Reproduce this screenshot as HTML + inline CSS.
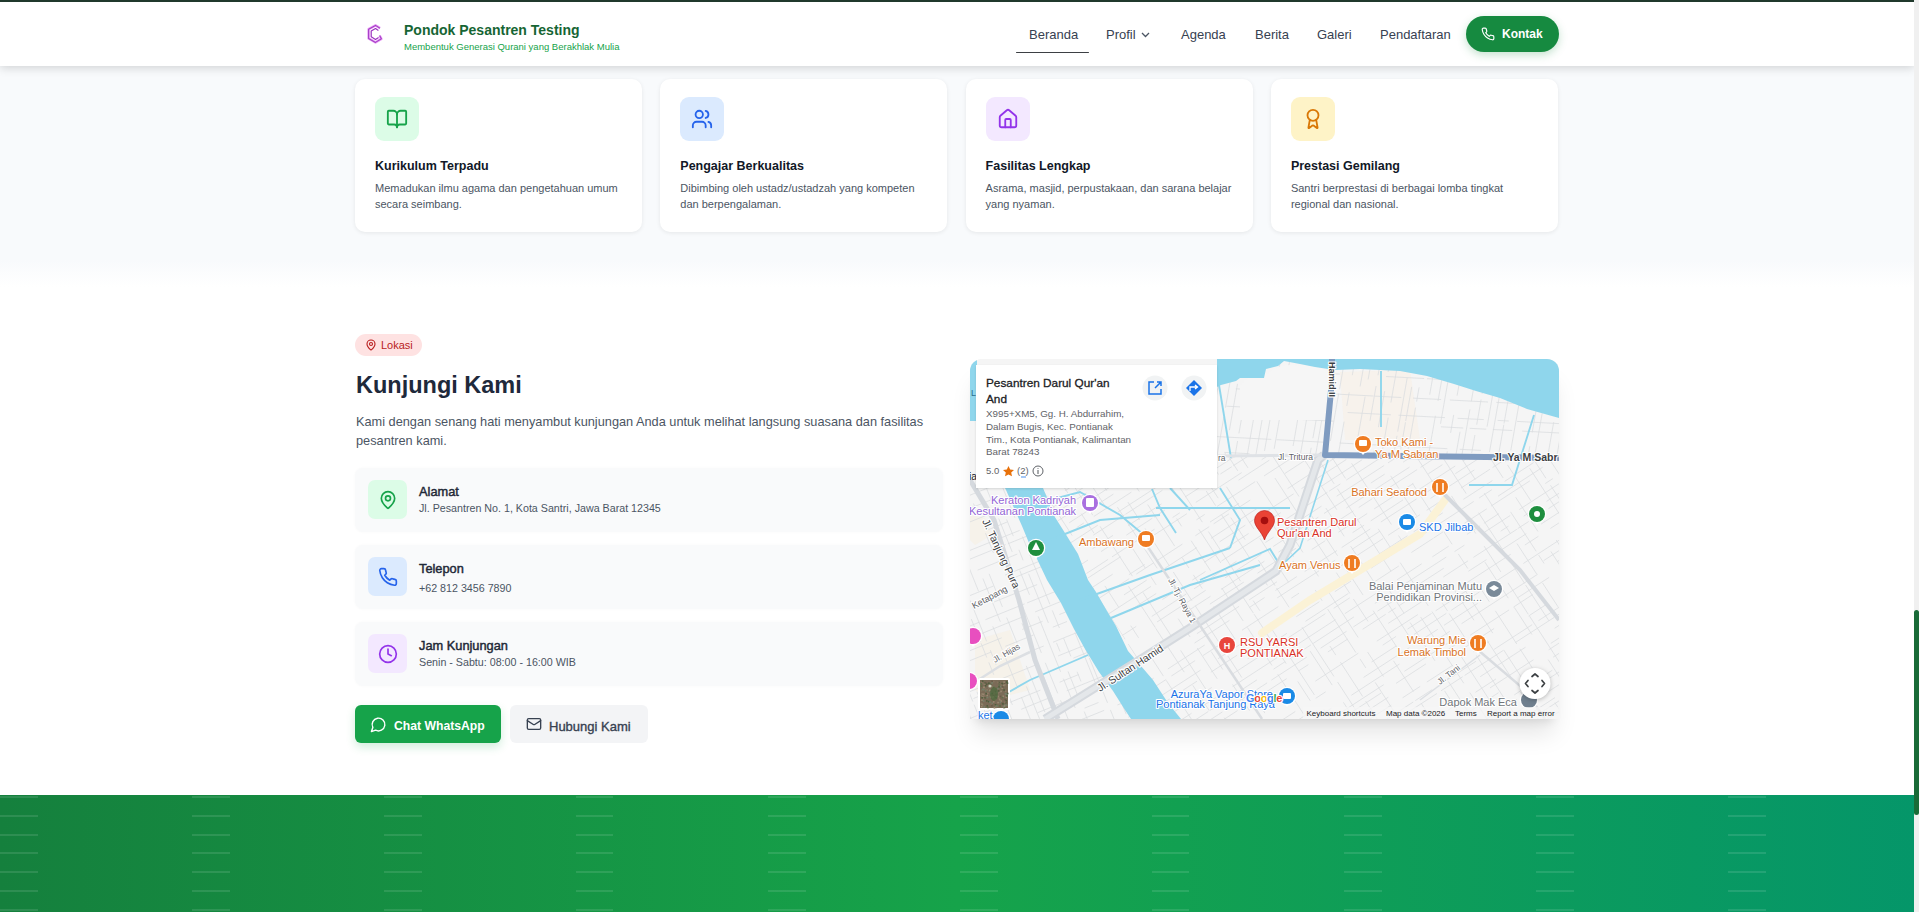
<!DOCTYPE html>
<html><head><meta charset="utf-8">
<style>
*{margin:0;padding:0;box-sizing:border-box}
html,body{width:1919px;height:912px;overflow:hidden;background:#fff;font-family:"Liberation Sans",sans-serif}
.abs{position:absolute}
#page{position:absolute;left:0;top:0;width:1914px;height:912px;overflow:hidden;background:#fff}
#sec1{position:absolute;left:0;top:0;width:1914px;height:287px;background:linear-gradient(to bottom,#f8fafc 0,#f8fafc 260px,#fff 287px)}
#topline{position:absolute;left:0;top:0;width:1914px;height:2px;background:#20392c;z-index:5}
#header{position:absolute;left:0;top:2px;width:1914px;height:64px;background:#fff;box-shadow:0 2px 9px rgba(0,0,0,.16);z-index:4}
.card{position:absolute;top:79px;width:287px;height:153px;background:#fff;border-radius:10px;box-shadow:0 1px 4px rgba(0,0,0,.08)}
.ibox{position:absolute;left:20px;top:18px;width:44px;height:44px;border-radius:9px;display:flex;align-items:center;justify-content:center}
.ctitle{position:absolute;left:20px;top:79.5px;font-size:12.5px;font-weight:bold;color:#111827;white-space:nowrap}
.cdesc{position:absolute;left:20px;top:101px;font-size:11px;line-height:16px;color:#4b5563;width:252px}
.nav{position:absolute;top:26px;font-size:13px;color:#374151;white-space:nowrap}
.info{position:absolute;left:355px;width:588px;height:64px;background:#f9fafb;border-radius:8px;box-shadow:0 0 3px rgba(0,0,0,.03)}
.info .ic{position:absolute;left:13px;top:12px;width:39px;height:39px;border-radius:7px;display:flex;align-items:center;justify-content:center}
.info .t{position:absolute;left:64px;top:16px;font-size:12.8px;font-weight:normal;-webkit-text-stroke:.45px #1f2937;color:#1f2937;white-space:nowrap}
.info .s{position:absolute;left:64px;top:34px;font-size:10.7px;color:#4b5563;white-space:nowrap}
#footer{position:absolute;left:0;top:795px;width:1914px;height:117px;background:linear-gradient(90deg,#15803d 0%,#16a34a 50%,#059669 100%)}
#fpat{position:absolute;left:0;top:0;width:1914px;height:117px;background-image:repeating-linear-gradient(to bottom,rgba(255,255,255,.11) 0,rgba(255,255,255,.11) 2px,transparent 2px,transparent 18.8px);-webkit-mask-image:repeating-linear-gradient(to right,#000 0,#000 37.5px,transparent 37.5px,transparent 192px);background-position:0 1px}
#sbtrack{position:absolute;left:1914px;top:0;width:5px;height:912px;background:#f0f0f0}
#sbthumb{position:absolute;left:1914px;top:610px;width:5px;height:205px;background:#1a6b38;border-radius:3px}
</style></head>
<body>
<div id="page">
  <div id="sec1"></div>
  <div id="topline"></div>
  <div id="header">
    <svg class="abs" style="left:362px;top:18px" width="28" height="28" viewBox="362 20 28 28">
      <path d="M380,28.2 L375.5,25.4 L368.6,29.2 L368.6,38.4 L375.5,42.4 L381.4,38.8 L379.6,35.6" fill="none" stroke="#e9a6f5" stroke-width="2.6" stroke-linejoin="round"/>
      <path d="M380,28.2 L375.5,25.4 L368.6,29.2 L368.6,38.4 L375.5,42.4 L381.4,38.8 L379.6,35.6" fill="none" stroke="#a63cc8" stroke-width="1.1" stroke-linejoin="round"/>
      <path d="M378.4,30.4 L375.5,28.6 L371.2,31 L371.2,36.8 L375.5,39.4 L378.6,37.6" fill="none" stroke="#9a30bf" stroke-width="1.2" stroke-linejoin="round"/>
    </svg>
    <div id="brand" class="abs" style="left:404px;top:19.5px;font-size:14px;font-weight:bold;color:#166534;white-space:nowrap">Pondok Pesantren Testing</div>
    <div id="tag" class="abs" style="left:404px;top:39px;font-size:9.5px;color:#16a34a;white-space:nowrap">Membentuk Generasi Qurani yang Berakhlak Mulia</div>
    <div id="n1" class="nav" style="left:1029px;top:25px">Beranda</div>
    <div class="abs" style="left:1016px;top:49.8px;width:73px;height:1.5px;border-radius:1px;background:#3d4044"></div>
    <div id="n2" class="nav" style="left:1106px;top:25px">Profil</div>
    <svg class="abs" style="left:1141px;top:30px" width="9" height="6" viewBox="0 0 9 6"><path d="M1 1 L4.5 4.5 L8 1" fill="none" stroke="#4b5563" stroke-width="1.3"/></svg>
    <div id="n3" class="nav" style="left:1181px;top:25px">Agenda</div>
    <div id="n4" class="nav" style="left:1255px;top:25px">Berita</div>
    <div id="n5" class="nav" style="left:1317px;top:25px">Galeri</div>
    <div id="n6" class="nav" style="left:1380px;top:25px">Pendaftaran</div>
    <div id="kontak" class="abs" style="left:1466px;top:14px;width:93px;height:36px;border-radius:18px;background:#168a40;box-shadow:0 3px 8px rgba(22,138,64,.25)">
      <svg class="abs" style="left:15px;top:11px" width="14" height="14" viewBox="0 0 24 24" fill="none" stroke="#fff" stroke-width="2" stroke-linecap="round" stroke-linejoin="round"><path d="M22 16.92v3a2 2 0 0 1-2.18 2 19.79 19.79 0 0 1-8.63-3.07 19.5 19.5 0 0 1-6-6 19.79 19.79 0 0 1-3.07-8.67A2 2 0 0 1 4.11 2h3a2 2 0 0 1 2 1.72 12.84 12.84 0 0 0 .7 2.81 2 2 0 0 1-.45 2.11L8.09 9.91a16 16 0 0 0 6 6l1.27-1.27a2 2 0 0 1 2.11-.45 12.84 12.84 0 0 0 2.81.7A2 2 0 0 1 22 16.92z"/></svg>
      <div id="kt" class="abs" style="left:36px;top:10.5px;font-size:12px;font-weight:bold;color:#fff">Kontak</div>
    </div>
  </div>

  <!-- feature cards -->
  <div class="card" style="left:355px">
    <div class="ibox" style="background:#dcfce7">
      <svg width="22" height="22" viewBox="0 0 24 24" fill="none" stroke="#16a34a" stroke-width="2" stroke-linecap="round" stroke-linejoin="round"><path d="M12 7v14"/><path d="M3 18a1 1 0 0 1-1-1V4a1 1 0 0 1 1-1h5a4 4 0 0 1 4 4 4 4 0 0 1 4-4h5a1 1 0 0 1 1 1v13a1 1 0 0 1-1 1h-6a3 3 0 0 0-3 3 3 3 0 0 0-3-3z"/></svg>
    </div>
    <div id="c1t" class="ctitle">Kurikulum Terpadu</div>
    <div id="c1d" class="cdesc">Memadukan ilmu agama dan pengetahuan umum secara seimbang.</div>
  </div>
  <div class="card" style="left:660.3px">
    <div class="ibox" style="background:#dbeafe">
      <svg width="22" height="22" viewBox="0 0 24 24" fill="none" stroke="#2563eb" stroke-width="2" stroke-linecap="round" stroke-linejoin="round"><path d="M16 21v-2a4 4 0 0 0-4-4H6a4 4 0 0 0-4 4v2"/><circle cx="9" cy="7" r="4"/><path d="M22 21v-2a4 4 0 0 0-3-3.87"/><path d="M16 3.13a4 4 0 0 1 0 7.75"/></svg>
    </div>
    <div class="ctitle">Pengajar Berkualitas</div>
    <div class="cdesc">Dibimbing oleh ustadz/ustadzah yang kompeten dan berpengalaman.</div>
  </div>
  <div class="card" style="left:965.6px">
    <div class="ibox" style="background:#f3e8ff">
      <svg width="22" height="22" viewBox="0 0 24 24" fill="none" stroke="#9333ea" stroke-width="2" stroke-linecap="round" stroke-linejoin="round"><path d="M15 21v-8a1 1 0 0 0-1-1h-4a1 1 0 0 0-1 1v8"/><path d="M3 10a2 2 0 0 1 .709-1.528l7-5.999a2 2 0 0 1 2.582 0l7 5.999A2 2 0 0 1 21 10v9a2 2 0 0 1-2 2H5a2 2 0 0 1-2-2z"/></svg>
    </div>
    <div class="ctitle">Fasilitas Lengkap</div>
    <div class="cdesc">Asrama, masjid, perpustakaan, dan sarana belajar yang nyaman.</div>
  </div>
  <div class="card" style="left:1270.9px">
    <div class="ibox" style="background:#fef3c7">
      <svg width="22" height="22" viewBox="0 0 24 24" fill="none" stroke="#d97706" stroke-width="2" stroke-linecap="round" stroke-linejoin="round"><path d="m15.477 12.89 1.515 8.526a.5.5 0 0 1-.81.47l-3.58-2.687a1 1 0 0 0-1.197 0l-3.586 2.686a.5.5 0 0 1-.81-.469l1.514-8.526"/><circle cx="12" cy="8" r="6"/></svg>
    </div>
    <div class="ctitle">Prestasi Gemilang</div>
    <div class="cdesc">Santri berprestasi di berbagai lomba tingkat regional dan nasional.</div>
  </div>

  <!-- lokasi -->
  <div id="badge" class="abs" style="left:355px;top:334px;width:67px;height:22px;border-radius:11px;background:#fee2e2">
    <svg class="abs" style="left:10px;top:5px" width="12" height="12" viewBox="0 0 24 24" fill="none" stroke="#b91c1c" stroke-width="2.2" stroke-linecap="round" stroke-linejoin="round"><path d="M20 10c0 4.993-5.539 10.193-7.399 11.799a1 1 0 0 1-1.202 0C9.539 20.193 4 14.993 4 10a8 8 0 0 1 16 0"/><circle cx="12" cy="10" r="3"/></svg>
    <div id="lok" class="abs" style="left:26px;top:5px;font-size:11px;color:#b91c1c">Lokasi</div>
  </div>
  <div id="h2" class="abs" style="left:356px;top:371.5px;font-size:23.5px;font-weight:bold;color:#1e293b;white-space:nowrap">Kunjungi Kami</div>
  <div id="para" class="abs" style="left:356px;top:412px;width:580px;font-size:12.75px;line-height:19px;color:#4b5563">Kami dengan senang hati menyambut kunjungan Anda untuk melihat langsung suasana dan fasilitas pesantren kami.</div>

  <div class="info" style="top:468px">
    <div class="ic" style="background:#dcfce7"><svg width="20" height="20" viewBox="0 0 24 24" fill="none" stroke="#16a34a" stroke-width="2" stroke-linecap="round" stroke-linejoin="round"><path d="M20 10c0 4.993-5.539 10.193-7.399 11.799a1 1 0 0 1-1.202 0C9.539 20.193 4 14.993 4 10a8 8 0 0 1 16 0"/><circle cx="12" cy="10" r="3"/></svg></div>
    <div id="i1t" class="t">Alamat</div>
    <div id="i1s" class="s">Jl. Pesantren No. 1, Kota Santri, Jawa Barat 12345</div>
  </div>
  <div class="info" style="top:545px">
    <div class="ic" style="background:#dbeafe"><svg width="20" height="20" viewBox="0 0 24 24" fill="none" stroke="#2563eb" stroke-width="2" stroke-linecap="round" stroke-linejoin="round"><path d="M22 16.92v3a2 2 0 0 1-2.18 2 19.79 19.79 0 0 1-8.63-3.07 19.5 19.5 0 0 1-6-6 19.79 19.79 0 0 1-3.07-8.67A2 2 0 0 1 4.11 2h3a2 2 0 0 1 2 1.72 12.84 12.84 0 0 0 .7 2.81 2 2 0 0 1-.45 2.110L8.09 9.91a16 16 0 0 0 6 6l1.27-1.27a2 2 0 0 1 2.11-.45 12.84 12.84 0 0 0 2.81.7A2 2 0 0 1 22 16.92z"/></svg></div>
    <div class="t">Telepon</div>
    <div class="s" style="top:36.5px">+62 812 3456 7890</div>
  </div>
  <div class="info" style="top:622px">
    <div class="ic" style="background:#f3e8ff"><svg width="20" height="20" viewBox="0 0 24 24" fill="none" stroke="#9333ea" stroke-width="2" stroke-linecap="round" stroke-linejoin="round"><circle cx="12" cy="12" r="10"/><polyline points="12 6 12 12 16 14"/></svg></div>
    <div class="t">Jam Kunjungan</div>
    <div class="s">Senin - Sabtu: 08:00 - 16:00 WIB</div>
  </div>

  <div id="wa" class="abs" style="left:355px;top:705px;width:146px;height:38px;border-radius:6px;background:#16a34a;box-shadow:0 4px 10px rgba(22,163,74,.2)">
    <svg class="abs" style="left:15px;top:10.5px" width="17" height="17" viewBox="0 0 24 24" fill="none" stroke="#fff" stroke-width="2" stroke-linecap="round" stroke-linejoin="round"><path d="M7.9 20A9 9 0 1 0 4 16.1L2 22Z"/></svg>
    <div id="wat" class="abs" style="left:39px;top:14px;font-size:12.2px;font-weight:bold;color:#fff;white-space:nowrap">Chat WhatsApp</div>
  </div>
  <div id="hk" class="abs" style="left:510px;top:705px;width:138px;height:38px;border-radius:6px;background:#f3f4f6">
    <svg class="abs" style="left:16px;top:11px" width="16" height="16" viewBox="0 0 24 24" fill="none" stroke="#374151" stroke-width="2" stroke-linecap="round" stroke-linejoin="round"><rect width="20" height="16" x="2" y="4" rx="2"/><path d="m22 7-8.97 5.7a1.94 1.94 0 0 1-2.06 0L2 7"/></svg>
    <div id="hkt" class="abs" style="left:39px;top:13.5px;font-size:13px;color:#374151;white-space:nowrap;-webkit-text-stroke:.35px #374151">Hubungi Kami</div>
  </div>

  <!-- MAP -->
  <div id="map" class="abs" style="left:970px;top:359px;width:589px;height:360px;border-radius:12px 12px 0 0;overflow:hidden;background:#f1f3f4;box-shadow:0 20px 25px -5px rgba(0,0,0,.10),0 8px 10px -6px rgba(0,0,0,.10)">
<svg width="589" height="360" viewBox="970 359 589 360" style="position:absolute;left:0;top:0;font-family:'Liberation Sans',sans-serif">
<defs>
<clipPath id="cR1"><polygon points="1217,359 1559,359 1559,455 1330,455 1217,458"/></clipPath>
<clipPath id="cR2"><polygon points="1217,455 1559,455 1559,719 1175,719 1100,600 1040,488 1217,488"/></clipPath>
<clipPath id="cR3"><polygon points="970,488 1040,488 1100,600 1140,719 970,719"/></clipPath>
</defs>
<rect x="970" y="359" width="589" height="360" fill="#f5f5f5"/>
<polygon points="1340,372 1410,370 1420,440 1345,440" fill="#f8efe3" opacity=".55"/>
<polygon points="970,515 985,518 992,535 975,545 970,540" fill="#f7f0e0" opacity=".5"/><polygon points="975,640 1010,630 1030,690 990,700 975,690" fill="#f7f0e0" opacity=".5"/>
<path clip-path="url(#cR1)" d="M1684.3 197.9L1681.5 213.5M1678.7 229.5L1672.5 264.8M1670.9 273.8L1664.9 307.7M1664.7 308.6L1662.7 320.1M1662.3 322.3L1653.5 372.5M1652.9 375.6L1645.9 415.6M1641.8 438.9L1636.8 467.1M1632.5 491.1L1623.4 543.0M1618.4 571.6L1615.3 588.8M1612.8 603.1L1608.1 630.0M1605.7 643.5L1603.8 654.4M1602.9 659.5L1597.6 689.3M1596.2 697.0L1590.8 728.1M1673.4 196.0L1669.8 216.3M1667.3 230.5L1658.0 283.2M1654.9 301.1L1644.6 359.2M1644.1 362.1L1635.9 408.8M1635.2 412.5L1633.5 422.4M1630.6 438.8L1624.0 476.1M1620.2 497.6L1612.5 541.1M1600.8 607.7L1595.1 639.8M1663.9 194.3L1659.9 216.7M1658.2 226.2L1656.7 235.3M1654.7 246.6L1652.2 260.5M1651.9 262.0L1649.4 276.5M1648.3 282.6L1639.1 335.1M1628.5 394.8L1619.3 446.9M1609.7 501.8L1606.9 517.4M1606.1 521.8L1602.6 541.6M1600.5 553.5L1596.8 574.9M1589.6 615.7L1582.0 658.9M1655.2 192.8L1646.0 245.4M1642.5 265.1L1637.5 293.4M1637.1 295.9L1635.1 307.0M1634.8 308.6L1632.0 324.8M1630.5 333.2L1629.1 341.1M1623.6 372.0L1616.7 411.3M1616.1 414.9L1611.5 440.6M1610.0 449.6L1600.9 500.9M1596.6 525.4L1590.8 558.0M1581.9 608.8L1575.7 643.7M1571.2 669.6L1562.0 721.7M1648.6 191.6L1645.7 208.0M1642.3 227.0L1633.9 274.8M1619.5 356.6L1610.8 405.8M1607.3 425.9L1603.8 445.4M1601.6 458.1L1599.9 467.5M1583.6 560.2L1573.6 617.0M1572.0 626.0L1568.5 645.5M1639.1 189.9L1631.8 231.2M1628.4 250.9L1621.0 292.6M1617.1 315.0L1608.9 361.3M1596.9 429.6L1586.7 487.2M1585.0 496.9L1575.0 553.3M1559.4 642.0L1549.2 700.1M1608.6 308.9L1605.3 327.6M1604.2 333.8L1600.7 354.0M1592.4 401.0L1587.8 427.0M1574.4 502.8L1568.5 536.4M1566.2 549.5L1564.6 558.3M1562.7 569.1L1561.3 577.2M1557.8 596.9L1552.2 629.0M1549.0 646.9L1544.7 671.4M1542.4 684.2L1534.0 732.2M1622.6 187.0L1618.7 209.1M1605.6 283.4L1600.2 314.0M1597.6 329.1L1591.5 363.2M1562.6 527.4L1553.6 578.3M1553.0 581.7L1547.6 612.2M1547.3 614.0L1545.3 625.6M1542.4 642.1L1532.9 695.9M1605.0 222.0L1601.7 241.1M1587.5 321.8L1584.6 337.9M1582.7 348.5L1578.3 373.8M1577.4 378.6L1569.5 423.5M1569.4 423.9L1564.1 454.4M1564.0 454.8L1557.0 494.7M1541.0 585.0L1538.7 598.2M1537.6 604.8L1529.1 652.6M1604.8 183.9L1602.1 199.4M1598.1 222.0L1590.4 265.8M1590.0 268.0L1582.4 311.1M1567.9 393.1L1565.8 405.3M1562.1 426.4L1552.9 478.4M1550.9 489.6L1544.5 525.8M1540.5 548.6L1538.0 563.1M1535.7 576.1L1533.3 589.6M1532.6 593.5L1529.4 611.8M1528.0 619.4L1519.8 666.2M1518.5 673.3L1515.5 690.3M1596.0 182.3L1594.5 191.0M1586.1 238.3L1583.8 251.6M1580.2 271.8L1574.4 305.0M1561.8 376.3L1557.3 401.7M1553.7 422.2L1546.6 462.7M1544.8 472.6L1542.9 483.3M1542.4 486.5L1534.3 532.3M1527.4 571.5L1519.9 613.8M1518.7 620.7L1514.7 643.6M1506.1 692.1L1496.0 749.8M1583.3 180.1L1579.2 203.8M1577.6 212.6L1572.8 240.0M1570.7 251.7L1567.5 269.9M1565.3 282.3L1561.6 303.7M1561.2 305.9L1559.4 315.9M1559.3 316.5L1555.8 336.3M1553.3 350.7L1545.1 397.0M1542.2 413.2L1532.9 466.1M1531.2 475.7L1520.9 534.0M1512.9 579.6L1503.5 633.1M1500.7 648.6L1492.0 698.0M1564.5 249.4L1557.9 287.2M1554.0 309.2L1546.3 352.6M1545.3 358.2L1542.7 372.9M1541.2 381.8L1532.2 432.5M1529.8 446.2L1522.8 486.2M1519.8 502.9L1518.4 511.0M1514.9 530.6L1509.0 564.2M1506.7 577.4L1504.7 588.7M1501.5 606.8L1499.4 618.5M1491.8 661.7L1486.0 694.8M1567.1 177.2L1558.8 224.4M1556.1 239.6L1554.0 251.4M1553.4 255.0L1545.3 301.0M1544.0 308.5L1542.5 317.0M1542.2 318.5L1534.8 360.8M1531.7 377.8L1527.7 400.6M1508.4 510.2L1498.3 567.7M1496.3 578.7L1493.0 597.4M1488.9 620.6L1482.3 658.3M1559.2 175.8L1549.8 229.1M1546.7 246.4L1537.2 300.3M1535.1 312.3L1533.7 320.3M1531.6 332.4L1527.5 355.8M1526.8 359.2L1522.6 383.3M1519.0 404.0L1510.8 450.3M1494.3 543.8L1490.3 566.6M1488.7 575.7L1478.3 634.7M1475.7 649.3L1470.5 679.0M1469.3 685.8L1467.0 698.9M1548.1 173.9L1544.4 194.5M1538.5 227.8L1529.2 281.0M1525.6 301.0L1516.0 355.6M1511.9 378.8L1504.0 423.5M1503.8 424.8L1498.4 455.7M1490.9 498.0L1488.4 512.4M1479.0 565.3L1475.3 586.5M1472.4 602.7L1466.0 639.1M1538.9 172.2L1533.4 203.2M1532.8 206.6L1530.6 219.1M1529.1 227.5L1525.6 247.7M1524.4 254.0L1515.0 307.3M1511.8 325.8L1506.7 354.9M1504.4 367.8L1499.9 393.0M1499.7 394.5L1489.5 451.9M1489.0 455.0L1481.9 495.2M1478.2 516.4L1474.3 538.2M1463.7 598.5L1454.4 651.0M1454.3 651.6L1446.5 695.8M1516.5 259.8L1512.9 280.4M1503.4 334.5L1495.5 379.4M1492.6 395.3L1487.1 426.6M1475.3 493.8L1468.0 534.8M1466.7 542.2L1463.1 563.0M1460.3 578.7L1457.9 592.3M1457.6 594.0L1450.9 631.8M1449.3 641.3L1442.4 680.0M1442.4 680.2L1436.9 711.7M1521.7 169.2L1516.1 201.4M1515.0 207.2L1505.0 264.3M1501.9 281.6L1500.3 290.6M1498.2 302.9L1493.0 332.3M1491.9 338.6L1482.1 393.9M1481.1 399.5L1476.7 424.7M1474.9 435.0L1471.7 453.0M1461.4 511.4L1457.2 535.3M1453.6 555.5L1450.2 574.7M1446.9 593.4L1437.0 650.0M1434.8 662.2L1431.4 681.6M1512.5 167.6L1509.8 183.0M1508.1 192.7L1497.9 250.4M1481.1 345.7L1471.3 401.3M1469.9 409.4L1460.1 465.2M1456.8 483.6L1449.4 525.5M1447.8 534.8L1443.4 559.7M1437.2 594.7L1434.7 608.9M1422.4 679.0L1417.1 709.1M1506.7 166.6L1497.0 221.5M1496.2 226.3L1486.7 280.1M1486.6 280.8L1477.9 330.3M1460.0 431.8L1453.0 471.2M1451.9 477.7L1447.6 501.8M1446.4 508.6L1438.2 555.1M1434.2 577.7L1424.3 633.9M1497.8 165.0L1494.1 185.7M1481.7 256.2L1473.7 301.9M1470.1 322.2L1463.2 361.2M1461.8 369.2L1457.1 395.6M1453.7 414.9L1450.6 432.9M1447.3 451.4L1445.3 462.6M1436.6 512.1L1426.3 570.6M1425.1 577.1L1422.9 589.9M1420.7 602.2L1415.3 633.0M1414.3 638.7L1407.3 678.4M1478.6 207.9L1474.5 230.8M1472.1 244.8L1464.0 290.4M1458.9 319.6L1452.3 357.1M1450.8 365.1L1440.5 423.8M1422.4 526.5L1413.4 577.4M1409.4 599.9L1405.4 622.8M1480.1 161.9L1470.9 214.1M1469.0 225.2L1460.6 272.9M1456.5 296.2L1449.7 334.6M1447.0 349.8L1442.3 376.6M1441.7 380.1L1438.0 401.0M1435.4 415.8L1432.2 434.1M1432.1 434.3L1424.6 477.0M1423.8 481.5L1420.6 499.8M1417.1 519.4L1415.1 530.5M1414.7 533.0L1408.3 569.1M1405.6 584.8L1402.7 601.1M1394.4 648.1L1390.2 672.0M1471.0 160.3L1461.9 212.4M1457.5 237.0L1454.4 254.9M1451.2 272.9L1449.8 281.0M1435.3 363.1L1429.7 394.6M1419.9 450.5L1417.7 462.9M1415.0 478.3L1409.0 512.0M1408.4 515.6L1402.3 550.1M1385.3 646.8L1375.1 704.7M1459.5 158.2L1454.6 186.0M1450.7 208.2L1441.8 258.3M1436.0 291.5L1427.1 341.8M1426.3 346.3L1421.3 374.7M1419.1 387.4L1416.6 401.6M1415.5 407.7L1406.0 461.5M1397.4 510.2L1395.0 524.1M1392.4 538.8L1385.3 578.8M1384.0 586.4L1377.3 624.1M1375.5 634.6L1370.1 665.3M1452.2 157.0L1446.4 189.9M1445.4 195.7L1437.0 243.5M1435.0 254.8L1429.3 286.9M1428.9 289.6L1423.6 319.5M1423.2 321.7L1417.2 355.7M1417.0 356.7L1414.9 368.8M1411.7 386.9L1405.7 421.0M1405.5 422.3L1400.7 449.5M1396.5 472.9L1387.4 524.7M1446.3 155.9L1441.8 181.8M1422.9 288.5L1419.7 307.1M1418.5 313.6L1414.3 337.8M1414.1 338.7L1411.3 354.8M1407.2 377.9L1397.7 431.6M1397.0 435.8L1394.6 449.5M1392.2 462.6L1387.6 488.9M1383.8 510.4L1377.2 548.0M1373.4 569.7L1363.0 628.4M1434.7 153.9L1430.1 180.2M1426.8 199.0L1423.8 216.0M1420.6 234.3L1411.8 284.1M1410.7 290.4L1400.4 348.6M1397.9 363.1L1393.6 387.0M1393.6 387.0L1390.9 402.5M1388.2 417.7L1382.2 451.8M1378.3 473.9L1374.9 493.4M1372.0 509.5L1370.6 517.5M1369.1 526.2L1364.5 552.4M1363.5 557.9L1356.8 596.0M1349.6 636.5L1346.0 656.9M1345.4 660.5L1338.2 701.1M1426.8 152.5L1423.0 173.9M1423.0 174.2L1416.5 210.8M1415.0 219.5L1409.6 250.1M1405.5 273.1L1401.9 293.8M1398.0 316.0L1391.8 351.1M1390.0 361.1L1388.1 372.0M1384.7 391.1L1378.4 427.2M1374.3 450.4L1371.1 468.5M1368.4 483.5L1361.3 524.2M1357.7 544.2L1353.5 567.9M1352.2 575.3L1342.8 628.8M1339.4 648.0L1338.0 656.2M1417.6 150.9L1409.5 196.7M1407.6 207.9L1405.2 221.1M1404.2 226.9L1399.8 251.9M1396.5 270.4L1387.5 321.5M1384.4 339.1L1378.0 375.3M1376.1 386.0L1370.0 420.7M1357.8 489.9L1356.3 498.5M1355.2 505.0L1347.1 550.9M1343.0 574.2L1338.6 598.8M1334.8 620.5L1331.3 640.6M1396.7 217.3L1391.4 247.6M1388.2 265.5L1384.1 289.1M1383.1 294.3L1381.1 306.2M1375.0 340.5L1370.5 366.0M1369.9 369.5L1368.1 379.5M1365.1 396.6L1357.4 440.1M1345.9 505.4L1337.1 555.2M1320.1 652.0L1317.7 665.3M1402.2 148.1L1393.1 199.4M1389.6 219.4L1380.8 269.5M1378.0 285.1L1375.7 298.1M1375.3 300.5L1372.1 318.9M1370.7 326.7L1369.1 335.7M1368.0 342.0L1360.1 386.5M1346.3 465.2L1339.3 504.8M1339.2 505.5L1333.8 535.8M1330.5 554.8L1322.7 598.8M1392.6 146.4L1391.2 154.4M1390.3 159.4L1380.1 217.3M1380.1 217.4L1374.2 250.5M1363.4 311.8L1359.7 333.1M1355.6 356.3L1352.3 375.2M1349.2 392.4L1346.8 405.9M1344.1 421.6L1335.6 469.8M1332.5 487.0L1325.5 527.0M1323.9 535.8L1319.0 563.8M1315.1 585.8L1305.7 639.1M1305.6 639.8L1301.8 661.1M1382.6 144.7L1373.2 197.8M1372.2 203.6L1366.0 238.7M1362.8 257.3L1355.5 298.2M1354.0 306.8L1351.2 322.6M1347.6 343.4L1339.5 389.3M1338.7 393.5L1330.4 440.9M1327.9 455.2L1322.3 486.7M1318.5 508.5L1315.3 526.2M1314.0 533.6L1305.0 584.7M1304.3 588.5L1300.7 609.1M1299.3 617.1L1296.5 633.2M1295.0 641.3L1284.8 699.1M1366.7 165.1L1358.1 213.7M1354.9 231.8L1351.8 249.7M1349.0 265.4L1345.7 283.8M1344.1 293.4L1339.1 321.7M1335.6 341.2L1329.7 374.7M1327.0 390.3L1324.3 405.4M1321.7 420.3L1313.6 466.1M1309.7 488.4L1303.1 525.7M1281.8 646.3L1274.3 689.0M1365.2 141.6L1358.2 181.7M1357.7 184.1L1349.3 232.0M1346.2 249.6L1342.6 270.3M1340.7 280.7L1333.7 320.4M1331.9 330.5L1322.1 386.0M1321.4 390.5L1312.9 438.2M1311.2 447.8L1301.1 505.6M1294.7 541.9L1288.6 576.4M1288.1 578.9L1281.9 614.4M1278.8 632.1L1271.6 672.7M1355.9 140.0L1345.9 196.4M1345.0 201.6L1340.1 229.5M1336.8 248.3L1326.5 306.6M1324.9 315.4L1321.1 337.3M1319.3 347.1L1314.2 376.4M1312.3 386.8L1307.8 412.7M1306.6 419.2L1298.5 465.1M1294.4 488.2L1291.1 507.3M1287.6 527.1L1284.3 545.8M1283.7 549.0L1275.0 598.3M1336.6 199.2L1331.0 231.1M1329.7 238.3L1327.2 252.6M1323.6 273.1L1314.5 324.6M1313.3 331.1L1309.6 352.0M1307.8 362.5L1306.4 370.5M1303.2 388.3L1299.6 408.7M1298.3 416.1L1293.1 446.0M1267.0 593.6L1259.9 633.9M1259.9 634.3L1249.9 690.9M1339.8 137.1L1337.1 152.3M1321.6 240.0L1314.7 279.0M1298.5 371.3L1295.3 389.3M1282.3 463.0L1275.9 499.3M1274.8 505.9L1272.1 520.9M1270.0 533.0L1264.4 564.8M1255.5 615.0L1254.1 623.3M1329.5 135.3L1324.3 164.6M1320.1 188.3L1313.0 228.8M1300.4 300.4L1296.0 325.2M1291.7 349.3L1286.0 382.0M1282.1 404.1L1274.2 448.8M1271.5 464.2L1262.3 516.2M1260.7 525.2L1254.6 560.0M1251.2 579.0L1245.9 609.1M1320.4 133.7L1314.5 167.4M1313.3 174.1L1303.1 231.9M1300.3 248.0L1295.9 272.8M1294.5 280.6L1287.8 318.6M1280.2 361.9L1273.9 397.7M1271.4 411.8L1264.5 450.9M1261.7 467.1L1252.1 521.5M1249.4 536.6L1242.4 576.6M1239.3 593.7L1231.8 636.5M1230.9 641.7L1225.3 673.0M1298.8 211.7L1290.3 259.9M1287.8 273.7L1283.7 297.1M1273.8 353.2L1271.9 363.9M1269.5 377.9L1267.0 391.8M1263.5 411.8L1253.8 466.7M1244.4 520.0L1234.2 578.1M1232.1 589.8L1229.8 602.9M1227.0 618.7L1224.2 634.4M1304.4 130.9L1295.1 183.3M1294.6 186.5L1286.7 231.2M1285.7 237.2L1282.6 254.6M1282.4 255.9L1274.5 300.3M1270.8 321.4L1268.7 333.5M1265.9 349.0L1260.4 380.5M1256.3 403.4L1246.2 460.7M1238.8 503.0L1236.7 515.0M1235.3 522.6L1232.4 539.0M1228.7 560.2L1226.8 571.1M1225.2 580.2L1219.8 610.5M1216.9 627.2L1208.3 675.9M1292.6 128.8L1287.5 158.1M1285.8 167.6L1275.9 223.9M1268.2 267.5L1260.4 311.4M1245.8 394.8L1238.9 433.4M1237.6 441.0L1228.2 494.4M1215.8 564.4L1211.9 586.8M1282.8 127.1L1273.6 179.4M1271.1 193.5L1262.0 244.9M1258.5 264.8L1248.9 319.5M1247.4 328.0L1241.0 364.2M1237.5 383.9L1229.4 430.2M1225.3 453.1L1218.5 492.1M1215.5 508.7L1212.3 527.2M1211.2 533.5L1202.6 581.9M1200.6 593.2L1192.0 642.4M1275.2 125.7L1265.7 179.6M1261.9 201.3L1256.2 233.6M1253.6 248.1L1250.5 265.9M1249.7 270.3L1245.0 296.8M1242.6 310.7L1236.5 345.0M1235.9 348.7L1225.5 407.6M1223.9 416.9L1216.8 457.1M1213.3 476.5L1206.6 515.0M1203.3 533.2L1194.1 585.5M1192.0 597.4L1188.3 618.7M1252.5 191.2L1248.8 212.1M1248.7 213.0L1245.6 230.1M1245.3 232.2L1238.8 268.6M1235.1 290.0L1225.1 346.4M1221.2 368.8L1214.4 407.3M1212.7 417.1L1202.6 474.1M1201.5 480.4L1194.3 521.1M1190.2 544.7L1185.2 572.7M1183.3 583.7L1173.2 641.1M1255.1 152.8L1245.6 207.0M1241.9 227.6L1233.4 275.7M1230.3 293.2L1220.1 351.5M1219.8 352.9L1211.6 399.5M1207.5 422.6L1203.4 445.8M1200.9 460.3L1198.5 473.6M1197.1 481.6L1194.6 495.8M1192.5 507.7L1189.0 527.8M1188.4 531.3L1186.9 539.8M1183.8 557.5L1182.0 567.2M1245.1 154.6L1236.1 205.6M1233.4 221.1L1228.9 246.4M1225.3 266.7L1218.3 306.7M1217.7 310.2L1215.8 321.0M1212.7 338.6L1210.0 353.9M1206.2 375.3L1201.1 404.3M1200.4 408.1L1191.4 459.0M1182.8 508.1L1180.3 521.8M1176.1 545.9L1166.6 599.6M1163.7 616.1L1158.0 648.4M1232.8 170.8L1223.0 226.0M1222.6 228.4L1213.1 282.2M1212.9 283.6L1208.8 306.5M1204.6 330.6L1195.9 379.8M1194.4 388.2L1193.0 396.2M1184.4 444.8L1181.1 463.9M1178.6 477.9L1175.6 495.0M1172.2 514.0L1169.1 531.9M1168.7 533.9L1161.9 572.9M1159.7 585.1L1156.4 603.6M1153.8 618.6L1145.1 668.1M1233.6 118.4L1225.6 163.8M1223.8 173.9L1221.9 184.6M1218.4 204.5L1209.4 255.5M1205.7 276.8L1204.1 285.5M1200.2 307.9L1190.9 360.4M1189.8 367.0L1180.9 417.4M1179.3 426.5L1174.5 453.4M1172.0 468.0L1165.9 502.5M1158.4 545.1L1149.2 597.3M1147.8 605.2L1142.9 632.7M1220.4 116.1L1210.4 172.8M1208.3 185.0L1202.1 220.1M1199.8 233.3L1189.7 290.7M1185.3 315.5L1183.6 324.9M1183.2 327.3L1180.1 345.2M1180.0 345.6L1173.4 383.0M1171.1 395.9L1168.8 409.0M1165.0 430.4L1163.2 440.6M1162.7 443.7L1156.8 477.2M1155.6 484.1L1150.5 512.7M1149.9 516.1L1140.8 568.1M1131.3 621.8L1121.4 677.7M1203.9 159.1L1195.5 206.8M1175.1 322.4L1166.1 373.7M1165.8 375.0L1155.8 431.9M1151.7 454.9L1146.5 484.4M1143.8 500.0L1137.6 535.1M1137.3 536.8L1131.4 570.5M1191.5 184.3L1189.8 193.9M1187.0 209.7L1179.5 252.3M1178.3 259.1L1168.5 314.3M1157.9 374.8L1153.9 397.4M1147.5 433.6L1141.5 467.8M1140.3 474.4L1134.1 509.6M1133.5 513.2L1130.9 527.9M1129.6 535.1L1125.6 557.7M1124.6 563.7L1118.2 599.6M1114.6 620.2L1108.0 657.3M1194.7 111.6L1189.2 143.0M1186.8 156.5L1181.2 188.4M1179.8 196.1L1176.4 215.3M1174.2 227.9L1167.5 265.8M1167.5 266.1L1158.3 318.1M1150.2 364.0L1146.1 387.0M1142.8 406.0L1140.8 417.3M1137.0 438.8L1135.1 449.8M1133.4 459.4L1125.4 504.9M1124.9 507.6L1114.8 564.6M1111.6 582.8L1107.2 607.9M1186.9 110.2L1178.8 155.9M1175.6 174.2L1169.9 206.4M1156.3 283.6L1154.9 291.7M1151.6 310.5L1145.7 343.9M1132.9 416.2L1126.1 455.2M1124.4 464.5L1118.9 495.8M1115.7 513.6L1110.8 541.5M1100.7 598.9L1094.8 632.4" stroke="#dadcdf" stroke-width="0.75" fill="none"/>
<path clip-path="url(#cR1)" d="M1143.9 138.9L1159.4 139.7M1173.7 140.4L1186.3 141.1M1311.2 147.6L1319.8 148.1M1320.9 148.1L1354.8 149.9M1377.7 151.1L1413.7 153.0M1438.6 154.3L1473.5 156.1M1490.6 157.0L1517.1 158.4M1532.0 159.2L1589.2 162.2M1606.1 163.1L1619.2 163.8M1142.7 161.2L1175.9 162.9M1186.9 163.5L1246.7 166.6M1255.2 167.1L1305.6 169.7M1309.8 169.9L1368.6 173.0M1389.3 174.1L1403.0 174.8M1500.6 179.9L1530.5 181.5M1534.4 181.7L1568.9 183.5M1581.6 184.2L1599.0 185.1M1614.7 185.9L1641.1 187.3M1142.3 168.3L1171.7 169.9M1191.3 170.9L1235.2 173.2M1235.3 173.2L1287.0 175.9M1301.6 176.7L1319.8 177.6M1332.3 178.3L1354.1 179.4M1370.2 180.3L1430.0 183.4M1444.3 184.1L1458.6 184.9M1462.5 185.1L1476.1 185.8M1478.6 185.9L1513.7 187.8M1534.2 188.9L1584.1 191.5M1585.7 191.5L1633.7 194.1M1641.7 194.5L1668.1 195.9M1141.4 184.8L1196.4 187.7M1210.9 188.5L1242.3 190.1M1320.7 194.2L1351.5 195.8M1486.1 202.9L1519.8 204.7M1543.5 205.9L1571.7 207.4M1589.7 208.3L1613.7 209.6M1635.6 210.7L1684.7 213.3M1140.5 203.3L1158.2 204.2M1182.4 205.5L1219.6 207.4M1222.4 207.6L1250.4 209.1M1260.5 209.6L1274.9 210.3M1295.5 211.4L1316.2 212.5M1321.0 212.8L1341.3 213.8M1342.2 213.9L1367.9 215.2M1417.0 217.8L1466.8 220.4M1525.7 223.5L1544.5 224.5M1568.2 225.7L1588.0 226.8M1650.5 230.0L1689.0 232.0M1139.5 221.7L1158.5 222.7M1180.3 223.8L1214.9 225.6M1228.5 226.3L1276.6 228.9M1286.2 229.4L1323.6 231.3M1348.3 232.6L1372.9 233.9M1389.5 234.8L1426.6 236.7M1435.7 237.2L1459.1 238.4M1460.7 238.5L1480.5 239.5M1586.6 245.1L1601.5 245.9M1608.4 246.2L1651.7 248.5M1138.8 235.8L1181.0 238.0M1198.4 238.9L1250.4 241.6M1279.5 243.1L1325.6 245.6M1343.4 246.5L1353.5 247.0M1357.5 247.2L1381.2 248.5M1390.7 249.0L1414.9 250.2M1430.8 251.1L1482.4 253.8M1496.6 254.5L1517.8 255.6M1554.8 257.6L1603.1 260.1M1610.3 260.5L1662.6 263.2M1138.0 250.1L1151.8 250.9M1171.5 251.9L1227.0 254.8M1245.7 255.8L1289.8 258.1M1299.6 258.6L1350.6 261.3M1487.7 268.5L1528.3 270.6M1539.6 271.2L1583.9 273.5M1594.6 274.1L1650.8 277.0M1137.2 266.3L1173.5 268.2M1197.7 269.5L1234.0 271.4M1240.2 271.7L1266.8 273.1M1277.1 273.6L1301.2 274.9M1304.6 275.1L1347.4 277.3M1432.9 281.8L1448.3 282.6M1462.3 283.3L1512.6 286.0M1526.3 286.7L1543.1 287.6M1610.8 291.1L1624.7 291.8M1632.0 292.2L1650.7 293.2M1652.2 293.3L1670.4 294.2M1136.4 280.8L1161.3 282.1M1173.0 282.8L1189.7 283.6M1191.5 283.7L1251.0 286.8M1269.7 287.8L1314.9 290.2M1339.4 291.5L1353.0 292.2M1365.3 292.8L1383.1 293.8M1396.7 294.5L1452.4 297.4M1468.5 298.2L1525.0 301.2M1541.3 302.1L1562.1 303.1M1565.6 303.3L1613.8 305.9M1171.5 306.5L1218.0 309.0M1226.2 309.4L1277.0 312.0M1330.9 314.9L1351.3 315.9M1352.3 316.0L1392.9 318.1M1413.4 319.2L1468.4 322.1M1492.0 323.3L1525.9 325.1M1529.8 325.3L1568.0 327.3M1597.5 328.8L1610.2 329.5M1611.2 329.6L1629.1 330.5M1647.1 331.4L1698.8 334.2M1134.6 315.8L1157.3 317.0M1173.8 317.8L1203.7 319.4M1275.3 323.2L1291.8 324.0M1299.2 324.4L1336.5 326.4M1345.2 326.8L1357.6 327.5M1446.8 332.1L1505.4 335.2M1529.4 336.5L1579.5 339.1M1581.0 339.2L1620.6 341.3M1628.0 341.6L1685.5 344.7M1133.8 330.6L1159.6 331.9M1181.7 333.1L1199.5 334.0M1216.5 334.9L1228.9 335.5M1245.4 336.4L1283.5 338.4M1293.9 338.9L1331.2 340.9M1341.1 341.4L1358.5 342.3M1380.7 343.5L1394.5 344.2M1416.1 345.3L1429.0 346.0M1442.2 346.7L1475.6 348.5M1489.5 349.2L1527.2 351.2M1530.0 351.3L1568.5 353.3M1593.3 354.6L1629.9 356.6M1647.7 357.5L1661.7 358.2M1133.1 344.6L1184.2 347.3M1194.0 347.8L1251.8 350.9M1265.9 351.6L1280.9 352.4M1300.3 353.4L1320.6 354.5M1329.9 355.0L1368.8 357.0M1429.4 360.2L1469.7 362.3M1491.5 363.4L1547.1 366.3M1568.8 367.5L1615.5 369.9M1624.1 370.4L1667.4 372.6M1132.1 363.2L1178.4 365.6M1202.0 366.9L1212.3 367.4M1227.4 368.2L1263.8 370.1M1283.9 371.2L1339.9 374.1M1386.0 376.5L1424.1 378.5M1427.0 378.7L1440.7 379.4M1460.7 380.4L1497.5 382.4M1589.2 387.2L1646.5 390.2M1145.4 384.0L1188.7 386.3M1198.5 386.8L1214.7 387.7M1235.8 388.8L1289.1 391.6M1334.9 394.0L1373.5 396.0M1374.5 396.1L1401.3 397.5M1413.0 398.1L1441.1 399.5M1449.9 400.0L1488.0 402.0M1496.3 402.4L1528.2 404.1M1552.8 405.4L1568.4 406.2M1585.1 407.1L1607.3 408.3M1130.1 401.1L1139.9 401.6M1153.9 402.4L1207.2 405.1M1226.5 406.2L1267.4 408.3M1347.6 412.5L1390.9 414.8M1398.5 415.2L1444.9 417.6M1457.6 418.3L1483.8 419.6M1497.6 420.4L1508.7 421.0M1517.1 421.4L1576.4 424.5M1588.4 425.1L1609.1 426.2M1630.2 427.3L1661.7 429.0M1129.6 410.5L1146.4 411.4M1148.0 411.4L1172.0 412.7M1255.4 417.1L1293.6 419.1M1295.6 419.2L1333.8 421.2M1440.9 426.8L1463.2 428.0M1469.7 428.3L1486.2 429.2M1492.9 429.5L1512.2 430.5M1522.2 431.1L1561.5 433.1M1128.5 431.9L1154.2 433.3M1157.6 433.5L1193.5 435.4M1215.3 436.5L1271.3 439.4M1276.5 439.7L1323.4 442.2M1339.7 443.0L1382.9 445.3M1391.3 445.7L1420.8 447.3M1422.0 447.3L1447.3 448.7M1459.7 449.3L1481.0 450.4M1562.7 454.7L1573.6 455.3M1588.9 456.1L1614.0 457.4M1616.3 457.5L1631.7 458.3M1127.7 447.3L1157.7 448.9M1171.1 449.6L1207.9 451.5M1224.3 452.4L1249.5 453.7M1268.0 454.7L1312.9 457.0M1375.3 460.3L1406.8 462.0M1413.8 462.3L1470.6 465.3M1473.9 465.5L1506.6 467.2M1523.0 468.1L1549.8 469.5M1574.5 470.8L1621.8 473.2M1624.0 473.3L1639.0 474.1M1127.1 459.0L1142.8 459.8M1147.2 460.1L1203.1 463.0M1261.6 466.1L1295.5 467.8M1311.4 468.7L1360.9 471.3M1372.4 471.9L1427.3 474.8M1430.0 474.9L1441.4 475.5M1457.5 476.3L1510.4 479.1M1564.1 481.9L1604.6 484.0M1610.2 484.3L1631.8 485.5M1642.7 486.0L1661.2 487.0M1126.3 474.4L1185.9 477.5M1269.6 481.9L1292.3 483.1M1300.5 483.5L1354.8 486.3M1358.8 486.5L1397.9 488.6M1553.4 496.7L1576.9 498.0M1636.3 501.1L1652.1 501.9M1125.5 489.1L1168.9 491.4M1244.8 495.3L1303.6 498.4M1304.4 498.5L1353.6 501.0M1370.8 501.9L1405.0 503.7M1424.7 504.8L1449.1 506.0M1471.1 507.2L1504.4 508.9M1507.7 509.1L1525.0 510.0M1542.1 510.9L1588.5 513.3M1124.3 511.9L1170.3 514.3M1177.1 514.7L1198.8 515.8M1200.5 515.9L1234.9 517.7M1245.1 518.2L1272.0 519.7M1272.2 519.7L1314.1 521.9M1396.1 526.2L1441.3 528.5M1451.3 529.0L1481.0 530.6M1505.3 531.9L1533.3 533.3M1543.6 533.9L1603.4 537.0M1603.5 537.0L1659.6 540.0M1123.7 523.0L1144.2 524.1M1220.5 528.1L1231.1 528.7M1248.4 529.6L1289.9 531.7M1303.6 532.5L1362.1 535.5M1362.1 535.5L1414.4 538.3M1427.2 538.9L1486.8 542.1M1492.7 542.4L1539.2 544.8M1548.7 545.3L1577.1 546.8M1590.3 547.5L1633.4 549.8M1641.5 550.2L1677.7 552.1M1122.9 537.9L1178.1 540.8M1189.9 541.5L1225.0 543.3M1236.9 543.9L1252.3 544.7M1396.4 552.3L1450.8 555.1M1521.0 558.8L1535.4 559.6M1561.5 560.9L1596.5 562.8M1607.8 563.4L1636.4 564.8M1122.0 555.7L1154.8 557.4M1174.8 558.5L1190.5 559.3M1207.5 560.2L1242.5 562.0M1248.5 562.3L1274.1 563.7M1283.6 564.2L1302.1 565.1M1316.3 565.9L1333.6 566.8M1411.0 570.8L1429.4 571.8M1440.0 572.4L1480.1 574.5M1489.3 574.9L1520.3 576.6M1529.5 577.0L1552.8 578.3M1563.0 578.8L1613.1 581.4M1621.9 581.9L1659.9 583.9M1120.9 576.7L1165.9 579.0M1175.2 579.5L1200.3 580.8M1202.0 580.9L1229.7 582.4M1242.8 583.1L1297.6 585.9M1316.5 586.9L1355.3 589.0M1366.9 589.6L1418.4 592.3M1428.8 592.8L1483.0 595.6M1494.0 596.2L1528.6 598.0M1549.2 599.1L1595.6 601.5M1605.6 602.1L1648.9 604.3M1120.2 590.7L1134.3 591.5M1139.8 591.7L1190.2 594.4M1192.8 594.5L1239.9 597.0M1254.0 597.7L1297.3 600.0M1315.1 600.9L1325.9 601.5M1406.4 605.7L1459.7 608.5M1498.4 610.5L1520.6 611.7M1527.2 612.0L1548.4 613.2M1569.8 614.3L1604.4 616.1M1119.3 607.5L1140.6 608.6M1145.7 608.9L1181.5 610.8M1190.9 611.3L1224.3 613.0M1293.4 616.7L1330.3 618.6M1331.6 618.7L1367.3 620.5M1377.5 621.1L1402.3 622.4M1500.0 627.5L1531.1 629.1M1553.0 630.3L1583.6 631.9M1599.5 632.7L1652.3 635.5M1188.7 620.7L1222.5 622.5M1267.9 624.8L1283.5 625.7M1306.4 626.9L1319.6 627.5M1322.0 627.7L1379.4 630.7M1389.7 631.2L1411.1 632.3M1433.7 633.5L1449.8 634.4M1451.2 634.4L1461.3 635.0M1482.2 636.1L1502.3 637.1M1557.7 640.0L1582.6 641.3M1603.6 642.4L1653.1 645.0M1118.0 631.6L1145.8 633.0M1161.7 633.9L1198.1 635.8M1200.4 635.9L1246.2 638.3M1257.0 638.9L1270.9 639.6M1372.4 644.9L1407.7 646.8M1499.2 651.6L1538.2 653.6M1117.0 650.5L1174.1 653.5M1190.5 654.4L1215.7 655.7M1227.0 656.3L1273.5 658.7M1278.0 659.0L1301.5 660.2M1303.2 660.3L1316.1 661.0M1329.9 661.7L1368.8 663.7M1380.3 664.3L1415.0 666.2M1417.4 666.3L1432.3 667.1M1446.7 667.8L1474.1 669.3M1490.7 670.1L1507.5 671.0M1531.0 672.2L1582.7 675.0M1622.6 677.0L1636.7 677.8" stroke="#dadcdf" stroke-width="0.75" fill="none"/>
<path clip-path="url(#cR2)" d="M851.0 492.6L878.1 475.0M881.6 472.8L910.4 454.1M918.1 449.1L942.4 433.3M946.6 430.5L963.8 419.4M1028.0 377.7L1056.0 359.5M1072.5 348.7L1109.3 324.9M1114.1 321.7L1127.5 313.0M1133.1 309.4L1156.9 293.9M1167.8 286.9L1213.3 257.3M1215.1 256.2L1232.0 245.2M1244.5 237.1L1282.2 212.6M1283.5 211.7L1316.3 190.4M1385.1 145.7L1406.8 131.7M856.1 500.5L880.6 484.6M882.4 483.4L921.2 458.3M935.4 449.0L957.1 434.9M983.3 417.9L1033.5 385.3M1094.8 345.5L1134.3 319.9M1147.6 311.2L1181.6 289.1M1199.4 277.6L1210.1 270.6M1225.1 260.9L1238.9 251.9M1301.2 211.5L1348.8 180.6M1367.8 168.2L1410.8 140.3M1427.6 129.4L1453.3 112.7M861.7 509.1L881.4 496.2M998.3 420.3L1015.1 409.4M1046.7 388.9L1083.3 365.2M1098.1 355.5L1139.0 328.9M1155.7 318.1L1203.5 287.1M1279.0 238.1L1320.2 211.3M1330.1 204.9L1355.0 188.7M1367.7 180.4L1389.1 166.6M1393.5 163.7L1437.1 135.4M1450.1 127.0L1460.6 120.1M864.9 514.0L900.5 491.0M1002.4 424.8L1035.7 403.1M1054.5 391.0L1083.0 372.5M1156.8 324.5L1170.6 315.6M1181.6 308.4L1196.0 299.1M1215.8 286.2L1257.8 258.9M1322.8 216.7L1368.5 187.0M1425.7 149.9L1448.2 135.3M1462.0 126.3L1485.1 111.3M906.6 499.2L915.8 493.2M933.3 481.9L964.3 461.7M973.7 455.6L1019.2 426.0M1034.5 416.1L1042.8 410.8M1049.6 406.3L1097.8 375.0M1116.5 362.8L1148.9 341.9M1161.0 334.0L1184.8 318.5M1200.4 308.4L1219.4 296.0M1274.7 260.2L1309.7 237.4M1326.5 226.5L1349.8 211.3M1370.0 198.2L1406.9 174.3M1412.7 170.5L1444.5 149.9M1461.8 138.6L1483.6 124.4M874.8 529.2L888.6 520.3M904.0 510.2L924.4 497.0M990.5 454.1L1005.8 444.1M1012.6 439.7L1024.0 432.3M1029.5 428.8L1053.0 413.5M1073.2 400.4L1088.8 390.2M1107.8 377.9L1151.1 349.8M1164.4 341.1L1184.9 327.9M1188.0 325.8L1215.3 308.1M1227.0 300.5L1266.5 274.8M1272.3 271.1L1319.0 240.7M1330.1 233.5L1364.3 211.3M1369.7 207.8L1378.3 202.3M1395.6 191.0L1417.7 176.6M1437.4 163.8L1454.7 152.6M1456.2 151.6L1495.8 125.9M879.0 535.6L890.5 528.1M897.0 524.0L945.8 492.2M1007.9 451.9L1047.0 426.5M1054.2 421.9L1096.0 394.7M1103.3 389.9L1148.1 360.9M1159.2 353.6L1195.1 330.3M1214.0 318.1L1235.5 304.1M1236.9 303.2L1265.5 284.6M1283.3 273.0L1315.3 252.3M1323.7 246.8L1342.4 234.7M1360.1 223.2L1403.4 195.1M882.9 541.7L927.9 512.5M930.7 510.7L968.1 486.4M1003.2 463.6L1021.8 451.5M1051.3 432.4L1093.0 405.3M1100.5 400.4L1110.4 394.0M1127.9 382.6L1134.8 378.1M1148.0 369.6L1166.7 357.4M1167.9 356.6L1198.9 336.5M1215.8 325.5L1258.6 297.7M1260.9 296.2L1295.1 274.1M1302.2 269.4L1333.7 249.0M1371.7 224.3L1401.8 204.7M1402.4 204.3L1410.4 199.2M1421.0 192.3L1430.4 186.1M1443.6 177.6L1475.9 156.6M888.2 549.8L929.9 522.7M950.1 509.6L999.8 477.3M1001.3 476.3L1013.9 468.2M1023.4 462.0L1061.0 437.6M1070.5 431.4L1085.5 421.7M1094.0 416.2L1109.1 406.3M1124.6 396.3L1150.4 379.5M1154.5 376.8L1169.8 366.9M1175.4 363.3L1212.7 339.1M1233.1 325.8L1281.2 294.6M1300.4 282.1L1338.5 257.3M1339.9 256.5L1347.1 251.8M1365.2 240.0L1399.4 217.8M1432.1 196.6L1452.1 183.6M891.1 554.4L902.3 547.1M955.0 512.9L1001.5 482.7M1018.1 471.9L1060.7 444.2M1063.4 442.5L1094.7 422.2M1181.0 366.1L1206.7 349.4M1222.1 339.4L1264.2 312.1M1281.8 300.6L1289.1 295.9M1317.0 277.8L1358.0 251.1M1367.7 244.8L1413.2 215.3M1458.3 186.0L1486.1 167.9M894.9 560.2L941.1 530.2M949.1 525.0L981.6 503.9M984.3 502.2L1010.9 484.9M1023.2 476.9L1060.7 452.5M1069.9 446.5L1108.2 421.7M1109.4 420.9L1133.5 405.2M1147.6 396.1L1164.8 384.9M1208.7 356.4L1241.5 335.1M1242.8 334.3L1292.6 302.0M1297.4 298.8L1338.4 272.2M1355.7 261.0L1394.8 235.6M1395.6 235.1L1444.9 203.1M900.3 568.5L947.1 538.1M952.6 534.5L960.1 529.7M976.0 519.4L1025.1 487.4M1040.0 477.8L1081.9 450.6M1159.9 399.9L1190.8 379.8M1208.1 368.6L1241.8 346.7M1254.3 338.6L1264.4 332.1M1265.5 331.3L1284.9 318.7M1332.9 287.6L1375.0 260.2M1384.6 254.0L1419.7 231.2M1424.0 228.4L1435.6 220.9M1456.0 207.6L1478.1 193.3M1480.1 192.0L1523.9 163.6M903.9 574.1L923.9 561.2M939.8 550.8L973.0 529.3M993.5 516.0L1000.5 511.4M1002.1 510.4L1039.0 486.4M1051.6 478.3L1078.1 461.0M1086.7 455.5L1121.7 432.7M1201.5 380.9L1239.4 356.3M1292.9 321.5L1307.4 312.1M1327.2 299.3L1364.7 274.9M1370.0 271.4L1391.9 257.2M1398.7 252.8L1424.8 235.9M909.9 583.4L949.5 557.7M955.2 554.0L979.9 537.9M980.4 537.6L1025.7 508.2M1101.6 458.9L1142.9 432.0M1154.1 424.8L1196.8 397.1M1237.4 370.7L1251.1 361.8M1262.2 354.6L1292.4 335.0M1373.1 282.6L1383.7 275.7M1388.2 272.8L1434.4 242.8M1434.7 242.6L1472.6 217.9M1493.4 204.5L1519.2 187.7M913.7 589.1L953.2 563.4M958.4 560.0L966.3 554.9M980.8 545.4L998.9 533.7M1019.1 520.6L1051.6 499.5M1065.3 490.6L1102.3 466.5M1108.7 462.4L1118.3 456.2M1118.6 456.0L1131.5 447.6M1133.9 446.0L1182.9 414.2M1197.3 404.9L1237.6 378.7M1241.3 376.3L1261.2 363.3M1269.8 357.8L1295.9 340.8M1365.7 295.5L1373.8 290.2M1391.2 279.0L1435.2 250.4M1452.0 239.5L1470.8 227.2M1471.0 227.1L1517.2 197.1M917.6 595.1L953.1 572.1M956.9 569.6L967.9 562.5M988.5 549.1L1023.6 526.3M1045.4 512.1L1057.8 504.1M1078.0 491.0L1116.2 466.2M1119.1 464.3L1136.8 452.8M1144.5 447.8L1156.0 440.3M1161.3 436.9L1180.4 424.5M1188.4 419.3L1204.9 408.6M1208.9 405.9L1232.4 390.7M1240.1 385.7L1267.3 368.0M1285.6 356.2L1321.2 333.0M1338.8 321.6L1346.8 316.4M1355.9 310.5L1382.7 293.1M1397.6 283.4L1409.5 275.7M1419.5 269.2L1436.3 258.3M1445.5 252.3L1455.2 246.0M1462.8 241.1L1510.3 210.2M972.0 567.3L1020.6 535.7M1038.6 524.0L1086.5 492.9M1097.5 485.8L1111.7 476.6M1145.7 454.5L1172.5 437.1M1187.8 427.1L1214.3 409.9M1221.0 405.6L1256.6 382.5M1264.1 377.5L1313.8 345.3M1323.9 338.7L1331.1 334.1M1344.7 325.2L1352.5 320.1M1362.4 313.7L1392.5 294.2M1397.4 291.0L1430.5 269.5M1444.2 260.6L1485.9 233.5M954.4 588.0L964.7 581.3M969.2 578.4L995.1 561.6M1049.6 526.2L1073.9 510.4M1088.1 501.2L1136.2 470.0M1141.1 466.8L1170.1 447.9M1190.0 435.0L1239.9 402.6M1331.6 343.0L1352.4 329.5M1360.9 324.0L1396.8 300.7M1397.3 300.4L1411.0 291.5M1428.4 280.2L1461.6 258.6M1467.0 255.1L1498.2 234.8M929.5 613.5L942.2 605.3M953.2 598.2L998.5 568.7M999.7 567.9L1013.7 558.8M1026.0 550.8L1050.6 534.9M1069.2 522.8L1113.4 494.1M1133.5 481.1L1181.3 450.0M1189.8 444.5L1236.4 414.2M1264.0 396.3L1308.7 367.3M1317.5 361.6L1361.2 333.2M1378.1 322.2L1407.2 303.3M1457.3 270.7L1503.3 240.9M1523.4 227.8L1533.5 221.3M934.0 620.3L970.9 596.4M976.2 592.9L998.9 578.2M1009.9 571.0L1019.8 564.6M1035.3 554.5L1062.6 536.8M1076.7 527.6L1083.8 523.0M1093.8 516.5L1131.4 492.1M1145.0 483.3L1193.5 451.8M1210.0 441.1L1235.5 424.5M1300.3 382.5L1317.1 371.5M1332.5 361.5L1368.2 338.4M1384.3 327.9L1400.7 317.3M1405.2 314.3L1413.5 309.0M1416.3 307.1L1441.4 290.8M1443.0 289.8L1490.8 258.7M1502.9 250.9L1540.3 226.6M939.1 628.3L946.6 623.4M960.8 614.2L983.6 599.4M1003.8 586.3L1046.9 558.2M1060.4 549.5L1097.8 525.2M1118.1 512.0L1158.2 486.0M1219.7 446.1L1264.5 416.9M1276.9 408.9L1284.2 404.1M1295.5 396.8L1314.0 384.8M1315.5 383.8L1329.8 374.6M1344.4 365.1L1361.1 354.2M1366.7 350.6L1416.4 318.3M1416.8 318.0L1464.3 287.2M1484.6 274.0L1506.0 260.1M1516.9 253.0L1541.8 236.8M942.3 633.3L952.7 626.5M956.1 624.3L990.0 602.3M1004.7 592.8L1045.9 566.0M1093.3 535.2L1124.4 515.0M1125.5 514.3L1162.4 490.3M1203.9 463.4L1214.7 456.4M1227.0 448.4L1264.6 424.0M1281.5 413.0L1298.3 402.1M1300.2 400.9L1331.6 380.5M1334.5 378.6L1366.6 357.8M1368.8 356.3L1386.1 345.1M1391.5 341.6L1421.4 322.1M1436.6 312.3L1474.9 287.4M1479.6 284.4L1514.2 261.9M1528.7 252.5L1574.7 222.6M948.3 642.4L966.4 630.7M969.7 628.5L1010.0 602.3M1027.4 591.1L1075.9 559.6M1092.5 548.7L1113.0 535.4M1128.1 525.6L1161.4 504.0M1195.6 481.8L1240.5 452.6M1250.2 446.3L1262.1 438.6M1272.8 431.7L1295.3 417.1M1310.3 407.3L1350.8 381.0M1353.1 379.5L1376.6 364.2M1386.8 357.6L1422.6 334.4M1427.3 331.3L1454.8 313.5M1502.0 282.8L1549.5 252.0M952.1 648.3L986.6 625.9M992.4 622.1L1041.9 590.0M1061.0 577.6L1088.0 560.0M1101.0 551.6L1110.7 545.3M1126.4 535.1L1152.2 518.3M1154.0 517.2L1164.8 510.1M1185.0 497.0L1204.3 484.5M1220.4 474.0L1231.8 466.7M1233.3 465.7L1263.2 446.3M1280.6 434.9L1294.9 425.7M1310.9 415.3L1332.4 401.3M1335.0 399.6L1384.1 367.8M1444.2 328.7L1471.6 311.0M1491.6 297.9L1510.9 285.4M1520.7 279.1L1559.4 253.9M957.8 657.0L969.2 649.6M986.2 638.6L1003.7 627.2M1062.1 589.3L1082.8 575.8M1086.4 573.5L1108.1 559.4M1112.0 556.9L1154.5 529.2M1172.6 517.5L1179.8 512.8M1195.8 502.4L1241.7 472.6M1261.7 459.7L1305.4 431.3M1322.6 420.1L1345.2 405.4M1353.1 400.3L1376.3 385.2M1378.6 383.7L1425.0 353.6M1433.6 348.0L1479.0 318.5M1003.6 632.8L1016.1 624.6M1077.2 585.0L1120.8 556.6M1139.3 544.7L1186.9 513.7M1238.7 480.1L1269.3 460.2M1336.1 416.8L1352.1 406.4M1359.3 401.8L1370.4 394.6M1377.2 390.1L1418.7 363.2M1423.4 360.1L1433.1 353.9M1483.9 320.8L1532.2 289.5M965.9 669.5L986.2 656.4M1028.2 629.1L1057.5 610.1M1067.6 603.5L1112.7 574.2M1196.5 519.8L1204.7 514.4M1217.1 506.4L1255.1 481.7M1264.1 475.9L1293.7 456.7M1310.9 445.5L1333.1 431.0M1384.1 398.0L1434.1 365.5M1443.1 359.6L1480.8 335.2M1500.3 322.5L1520.2 309.6M1527.1 305.1L1541.9 295.5M971.0 677.3L1002.1 657.1M1018.8 646.2L1065.2 616.1M1128.9 574.7L1144.7 564.5M1210.0 522.1L1239.0 503.3M1284.7 473.6L1309.9 457.2M1322.5 449.0L1341.3 436.8M1350.1 431.1L1377.2 413.5M1379.2 412.2L1400.7 398.2M1415.7 388.5L1432.8 377.4M1465.1 356.4L1480.7 346.3M1492.9 338.3L1532.3 312.8M972.8 680.2L1020.7 649.1M1030.0 643.1L1039.7 636.8M1056.5 625.9L1069.4 617.5M1079.0 611.3L1129.2 578.7M1136.3 574.1L1153.7 562.8M1157.8 560.1L1182.4 544.1M1195.4 535.7L1209.2 526.7M1213.7 523.8L1228.9 513.9M1235.5 509.6L1250.2 500.1M1319.6 455.0L1346.9 437.3M1351.0 434.6L1364.0 426.2M1367.6 423.9L1404.9 399.6M1425.2 386.5L1447.3 372.1M1456.2 366.3L1493.1 342.4M1501.3 337.0L1545.7 308.2M1557.7 300.4L1601.4 272.0M978.7 689.2L1025.5 658.8M1034.0 653.4L1053.7 640.6M1065.3 633.0L1104.1 607.8M1124.0 594.9L1146.6 580.2M1164.5 568.6L1196.9 547.5M1211.1 538.3L1259.0 507.2M1287.6 488.6L1329.3 461.6M1329.8 461.2L1357.5 443.3M1367.8 436.5L1413.6 406.8M1420.9 402.1L1468.2 371.4M1481.6 362.7L1502.8 348.9M1510.9 343.6L1551.9 317.0M1008.5 678.9L1022.2 670.0M1053.1 650.0L1066.2 641.4M1071.0 638.3L1089.2 626.5M1104.6 616.5L1151.0 586.4M1219.6 541.8L1245.3 525.2M1249.3 522.5L1293.5 493.9M1301.5 488.6L1346.3 459.5M1362.1 449.3L1411.4 417.2M1412.2 416.7L1424.4 408.9M1424.8 408.6L1459.0 386.4M1461.4 384.8L1476.0 375.3M1545.3 330.3L1570.9 313.7M987.6 703.0L1002.0 693.7M1005.7 691.2L1027.8 676.9M1043.2 666.9L1073.0 647.5M1087.3 638.2L1113.2 621.4M1129.8 610.6L1156.2 593.5M1204.4 562.2L1248.6 533.5M1267.7 521.1L1280.7 512.7M1321.3 486.3L1362.2 459.7M1373.0 452.7L1414.6 425.7M1423.2 420.1L1454.8 399.6M1538.7 345.1L1572.2 323.3M1578.8 319.0L1597.3 307.0M992.2 710.0L1034.7 682.4M1055.5 668.9L1076.1 655.5M1162.4 599.5L1172.8 592.7M1192.3 580.1L1205.5 571.5M1221.4 561.1L1267.7 531.1M1280.0 523.1L1327.4 492.3M1329.2 491.1L1340.4 483.9M1346.2 480.1L1390.9 451.1M1400.2 445.0L1418.1 433.4M1433.4 423.5L1444.4 416.4M1454.7 409.6L1470.8 399.2M1526.7 362.9L1576.9 330.3M1585.9 324.5L1627.8 297.2M996.7 717.0L1021.0 701.3M1040.9 688.4L1052.8 680.6M1105.9 646.1L1136.2 626.4M1151.8 616.4L1186.2 594.0M1194.1 588.8L1236.4 561.4M1265.4 542.5L1273.6 537.2M1283.4 530.9L1321.4 506.2M1336.7 496.2L1384.1 465.5M1388.0 462.9L1430.2 435.5M1432.7 433.9L1461.3 415.4M1468.3 410.8L1515.6 380.1M1525.5 373.6L1543.1 362.2M1074.4 675.6L1116.2 648.4M1157.1 621.9L1205.7 590.3M1225.1 577.8L1261.6 554.0M1273.2 546.5L1287.2 537.4M1290.1 535.5L1318.3 517.2M1324.0 513.5L1354.8 493.5M1370.8 483.1L1384.6 474.2M1403.2 462.1L1451.7 430.6M1472.3 417.2L1504.4 396.3M1524.7 383.2L1555.3 363.3M1561.8 359.0L1577.5 348.9M1005.0 729.7L1027.5 715.1M1047.4 702.2L1077.8 682.4M1095.9 670.7L1118.3 656.1M1185.1 612.8L1194.6 606.6M1194.8 606.4L1210.5 596.3M1221.1 589.4L1264.3 561.3M1278.4 552.2L1325.5 521.6M1346.3 508.1L1384.1 483.5M1384.2 483.5L1409.5 467.1M1429.8 453.9L1461.3 433.4M1519.9 395.3L1527.2 390.6M1576.6 358.5L1594.9 346.6M1008.4 735.0L1057.3 703.2M1092.8 680.2L1104.3 672.7M1120.0 662.5L1133.1 654.0M1209.9 604.1L1243.8 582.1M1257.5 573.2L1295.9 548.3M1307.4 540.8L1353.4 510.9M1358.7 507.5L1372.4 498.6M1375.5 496.6L1417.1 469.6M1420.5 467.4L1452.2 446.7M1464.0 439.1L1494.4 419.4M1494.7 419.2L1519.9 402.8M1524.8 399.6L1542.1 388.4M1559.4 377.2L1570.1 370.2M1580.1 363.7L1601.5 349.8M1013.7 743.1L1056.8 715.1M1066.3 708.9L1113.3 678.4M1125.9 670.2L1135.7 663.9M1137.4 662.7L1148.0 655.9M1192.5 627.0L1209.8 615.7M1213.1 613.6L1233.9 600.0M1253.0 587.6L1278.4 571.1M1281.9 568.9L1294.0 561.1M1311.7 549.5L1325.3 540.7M1338.4 532.2L1367.2 513.5M1374.2 508.9L1413.3 483.5M1428.3 473.8L1442.4 464.7M1493.9 431.2L1500.7 426.8M1505.4 423.7L1520.8 413.8M1522.6 412.6L1572.7 380.1M1579.7 375.5L1615.7 352.1M1018.1 749.9L1043.6 733.3M1098.0 698.0L1109.1 690.8M1119.6 683.9L1134.8 674.1M1196.9 633.7L1239.1 606.3M1249.1 599.9L1276.9 581.8M1352.5 532.7L1364.1 525.2M1370.8 520.8L1403.0 499.9M1418.1 490.1L1455.2 466.0M1462.9 461.0L1481.6 448.8M1502.2 435.5L1509.0 431.0M1510.9 429.8L1555.4 400.9M1568.7 392.3L1613.5 363.2M1021.6 755.3L1057.6 732.0M1098.2 705.6L1118.8 692.3M1194.6 643.0L1229.4 620.4M1249.3 607.5L1264.5 597.6M1275.4 590.5L1296.8 576.6M1304.7 571.5L1337.0 550.5M1341.7 547.5L1370.3 528.9M1380.9 522.0L1416.6 498.9M1420.5 496.3L1439.2 484.2M1455.3 473.7L1496.1 447.2M1507.0 440.2L1554.0 409.6M1564.7 402.6L1584.1 390.0M1592.5 384.6L1635.0 357.0M1025.5 761.4L1052.0 744.2M1059.5 739.3L1081.9 724.8M1097.7 714.5L1113.4 704.3M1118.3 701.1L1153.6 678.2M1167.8 669.0L1204.7 645.0M1277.2 597.9L1319.0 570.8M1323.8 567.7L1335.2 560.2M1351.9 549.4L1379.9 531.2M1430.5 498.4L1474.3 470.0M1524.1 437.6L1538.8 428.0M1542.1 425.9L1589.1 395.4M1606.9 383.8L1650.8 355.3M1029.8 768.0L1070.3 741.8M1078.1 736.7L1124.2 706.7M1133.4 700.7L1166.1 679.5M1171.4 676.0L1195.1 660.6M1203.1 655.5L1226.0 640.6M1242.0 630.2L1278.3 606.6M1291.4 598.1L1299.0 593.2M1336.9 568.6L1383.2 538.5M1388.1 535.3L1419.9 514.7M1426.7 510.3L1447.6 496.7M1461.1 488.0L1490.0 469.2M1492.6 467.5L1512.9 454.3M1570.1 417.2L1587.3 406.0M1605.2 394.3L1637.6 373.3M1035.8 777.1L1077.8 749.8M1083.5 746.2L1111.1 728.2M1131.8 714.8L1155.1 699.7M1159.9 696.6L1200.5 670.2M1218.1 658.7L1241.7 643.4M1258.5 632.5L1276.6 620.8M1292.3 610.5L1342.4 578.0M1344.3 576.8L1360.2 566.4M1360.3 566.4L1371.0 559.5M1378.7 554.4L1407.5 535.7M1413.6 531.8L1442.8 512.8M1463.4 499.4L1492.4 480.6M1551.4 442.3L1573.7 427.8M1580.8 423.2L1612.0 402.9M1618.0 399.1L1666.3 367.6M1039.8 783.3L1069.7 763.9M1076.6 759.4L1120.1 731.1M1127.2 726.5L1175.7 695.0M1183.2 690.1L1197.0 681.2M1210.9 672.2L1237.1 655.2M1296.3 616.7L1319.4 601.7M1334.8 591.7L1351.0 581.1M1371.2 568.1L1407.4 544.6M1417.8 537.8L1433.1 527.8M1436.7 525.5L1473.7 501.5M1479.1 498.0L1491.8 489.7M1504.6 481.4L1533.6 462.6M1540.1 458.3L1552.7 450.2M1562.8 443.6L1575.4 435.4M1581.9 431.2L1612.4 411.4M1625.3 403.0L1657.0 382.5M1044.6 790.7L1076.0 770.3M1138.4 729.8L1173.6 706.9M1247.6 658.8L1262.1 649.5M1279.4 638.2L1286.8 633.4M1305.5 621.3L1348.4 593.4M1411.4 552.5L1432.9 538.5M1433.4 538.2L1443.0 531.9M1444.5 531.0L1456.5 523.2M1498.0 496.2L1542.7 467.2M1610.7 423.0L1652.8 395.7M1047.0 794.4L1094.1 763.9M1105.6 756.4L1149.9 727.6M1152.9 725.6L1179.9 708.1M1196.4 697.4L1211.7 687.5M1231.7 674.5L1270.9 649.0M1288.3 637.7L1325.4 613.7M1333.7 608.3L1349.8 597.8M1369.9 584.8L1398.8 566.0M1464.5 523.3L1486.8 508.8M1491.2 506.0L1529.8 480.9M1576.4 450.6L1603.7 432.9M1614.3 426.0L1629.7 416.0M1644.8 406.2L1687.0 378.8M1052.8 803.3L1080.5 785.3M1088.4 780.2L1104.6 769.7M1160.7 733.3L1191.5 713.3M1204.1 705.1L1216.3 697.2M1232.6 686.6L1276.9 657.8M1293.4 647.1L1335.6 619.6M1344.8 613.7L1393.1 582.4M1397.0 579.8L1421.7 563.8M1432.4 556.8L1448.7 546.2M1466.9 534.4L1480.1 525.8M1483.9 523.3L1498.9 513.6M1545.3 483.5L1552.8 478.6M1572.3 466.0L1580.7 460.5M1596.8 450.1L1626.9 430.5M1631.5 427.5L1651.6 414.5M1057.0 809.8L1092.0 787.1M1099.8 782.0L1109.3 775.8M1122.8 767.0L1136.2 758.3M1176.5 732.2L1185.4 726.4M1190.6 723.0L1208.3 711.5M1210.1 710.3L1227.7 698.9M1234.0 694.8L1256.9 679.9M1273.5 669.2L1285.2 661.6M1289.8 658.6L1310.9 644.9M1313.2 643.4L1353.9 616.9M1374.8 603.4L1383.1 598.0M1399.0 587.7L1446.3 557.0M1454.5 551.6L1464.4 545.2M1484.3 532.3L1510.2 515.5M1519.4 509.5L1562.3 481.6M1572.3 475.1L1596.7 459.3M1615.4 447.1L1650.9 424.1M1108.4 786.0L1157.7 753.9M1158.0 753.7L1192.3 731.5M1210.0 720.0L1222.4 711.9M1228.7 707.8L1267.1 682.9M1271.4 680.1L1306.8 657.1M1320.6 648.2L1346.5 631.3M1353.4 626.9L1374.8 613.0M1377.4 611.2L1396.7 598.7M1413.2 588.0L1443.8 568.2M1500.7 531.2L1508.5 526.1M1523.7 516.2L1538.3 506.8M1546.5 501.4L1571.3 485.3M1573.9 483.6L1593.7 470.8M1065.2 822.5L1104.9 796.7M1128.7 781.3L1144.2 771.2M1153.5 765.2L1172.2 753.0M1220.4 721.7L1237.5 710.6M1266.7 691.6L1286.6 678.7M1298.9 670.7L1308.4 664.6M1327.8 652.0L1347.6 639.1M1362.6 629.3L1385.7 614.3M1388.4 612.6L1395.8 607.8M1398.9 605.8L1409.2 599.1M1443.3 577.0L1468.1 560.8M1473.4 557.4L1516.8 529.3M1517.7 528.6L1528.7 521.5M1548.5 508.6L1581.3 487.3M1599.4 475.6L1608.9 469.4M1623.4 460.0L1661.6 435.2M1667.4 431.4L1682.3 421.8M1070.1 830.0L1089.8 817.1M1095.6 813.4L1106.0 806.6M1122.8 795.7L1139.5 784.9M1141.9 783.3L1170.6 764.7M1185.7 754.9L1210.4 738.8M1388.2 623.4L1423.2 600.7M1440.2 589.6L1450.3 583.0M1468.4 571.3L1486.5 559.6M1499.4 551.2L1526.3 533.7M1541.2 524.0L1576.7 500.9M1578.9 499.5L1614.0 476.8M1628.4 467.4L1643.4 457.6M1663.5 444.6L1688.8 428.2M1074.8 837.3L1109.9 814.5M1216.6 745.3L1243.6 727.7M1315.3 681.2L1358.3 653.2M1376.8 641.2L1417.8 614.6M1467.3 582.4L1510.8 554.2M1524.9 545.0L1538.4 536.3M1550.3 528.5L1571.7 514.7M1616.5 485.5L1637.6 471.9M1655.4 460.3L1673.7 448.4M1125.0 812.5L1141.7 801.7M1147.0 798.2L1158.1 791.1M1172.9 781.4L1201.6 762.8M1382.7 645.2L1396.1 636.4M1407.5 629.1L1431.6 613.4M1435.6 610.8L1467.3 590.2M1574.1 520.9L1597.0 506.0M1599.1 504.6L1636.6 480.3M1656.1 467.6L1691.7 444.5M1082.8 849.5L1109.6 832.1M1181.9 785.1L1194.2 777.2M1238.2 748.6L1264.4 731.6M1281.0 720.8L1295.3 711.5M1315.7 698.3L1325.7 691.8M1371.5 662.0L1396.2 646.0M1414.1 634.4L1446.3 613.4M1451.3 610.2L1479.5 591.9M1487.8 586.5L1516.5 567.9M1523.3 563.5L1573.4 530.9M1577.7 528.1L1584.9 523.4M1586.9 522.2L1612.0 505.8M1629.6 494.4L1678.4 462.7M1087.5 856.8L1094.8 852.1M1102.8 846.8L1136.6 824.9M1138.0 824.0L1161.0 809.0M1197.9 785.1L1230.7 763.8M1233.1 762.2L1277.8 733.2M1298.5 719.8L1307.2 714.1M1363.6 677.4L1409.4 647.7M1414.6 644.4L1437.8 629.3M1444.0 625.3L1477.6 603.4M1543.7 560.6L1575.0 540.2M1595.9 526.7L1622.6 509.3M1634.2 501.7L1683.2 470.0M1150.8 825.5L1160.1 819.5M1176.7 808.7L1211.6 786.0M1228.4 775.1L1251.8 760.0M1256.5 756.9L1286.3 737.5M1299.0 729.3L1331.3 708.3M1351.3 695.3L1399.5 664.0M1435.5 640.7L1449.8 631.3M1461.5 623.7L1509.0 592.9M1509.4 592.6L1537.6 574.3M1557.3 561.6L1600.6 533.4M1609.0 528.0L1656.1 497.3M1657.5 496.5L1671.0 487.7M1673.8 485.9L1711.1 461.7M1175.7 819.9L1217.7 792.6M1222.5 789.4L1267.1 760.5M1284.4 749.3L1324.5 723.2M1340.7 712.7L1383.7 684.7M1404.4 671.3L1447.5 643.4M1517.6 597.8L1549.1 577.4M1588.1 552.0L1633.6 522.5M1638.6 519.2L1674.7 495.8M1677.3 494.1L1717.4 468.1M1149.9 843.1L1163.6 834.3M1165.8 832.8L1210.9 803.5M1214.3 801.3L1253.9 775.7M1255.8 774.4L1266.1 767.7M1271.3 764.3L1316.1 735.2M1324.7 729.7L1332.8 724.4M1339.9 719.8L1381.0 693.1M1396.0 683.4L1425.9 663.9M1440.5 654.4L1464.0 639.2M1470.2 635.2L1509.1 609.9M1513.6 607.0L1532.6 594.6M1586.4 559.7L1634.1 528.7M1643.5 522.6L1687.8 493.8M1693.2 490.3L1704.4 483.1M1103.8 881.9L1129.4 865.3M1191.1 825.2L1214.3 810.2M1216.8 808.5L1255.8 783.2M1275.2 770.6L1295.3 757.5M1342.1 727.2L1388.3 697.2M1459.4 651.0L1494.1 628.5M1613.1 551.2L1629.1 540.8M1108.3 888.9L1131.4 873.9M1140.1 868.2L1185.7 838.7M1205.5 825.8L1228.1 811.1M1230.4 809.6L1259.7 790.6M1271.9 782.6L1321.5 750.5M1358.7 726.3L1391.2 705.2M1402.6 697.8L1420.2 686.4M1426.8 682.1L1453.0 665.1M1473.5 651.7L1489.2 641.5M1528.6 616.0L1545.6 604.9M1561.9 594.3L1592.1 574.7M1603.3 567.5L1612.9 561.2M1669.4 524.5L1689.3 511.6M1690.7 510.7L1726.0 487.8M1113.4 896.7L1121.6 891.3M1137.0 881.3L1155.9 869.0M1183.9 850.9L1210.4 833.7M1225.4 823.9L1267.3 796.7M1279.8 788.6L1303.6 773.1M1315.4 765.5L1364.6 733.6M1378.7 724.4L1413.2 702.0M1415.3 700.6L1432.1 689.7M1449.8 678.2L1475.9 661.3M1494.1 649.4L1532.1 624.7M1538.5 620.6L1575.9 596.3M1582.1 592.3L1604.1 578.0M1620.1 567.6L1662.3 540.2M1116.6 901.5L1147.1 881.7M1155.2 876.4L1175.6 863.2M1180.0 860.3L1210.7 840.4M1226.6 830.1L1234.9 824.7M1251.0 814.2L1278.3 796.5M1278.3 796.5L1314.1 773.3M1330.1 762.9L1356.1 745.9M1371.5 736.0L1387.2 725.8M1398.4 718.5L1436.9 693.5M1441.0 690.8L1462.7 676.7M1464.7 675.4L1503.3 650.4M1515.4 642.5L1554.0 617.5M1556.4 615.9L1569.6 607.3M1606.4 583.4L1654.1 552.5M1660.0 548.6L1697.0 524.6M1708.8 516.9L1756.9 485.7M1121.7 909.4L1142.4 896.0M1213.4 849.9L1232.0 837.8M1236.5 834.9L1259.2 820.2M1261.7 818.5L1279.3 807.1M1291.4 799.2L1311.4 786.2M1368.0 749.5L1409.2 722.8M1480.2 676.7L1525.5 647.2M1554.6 628.3L1576.6 614.0M1587.0 607.3L1602.1 597.5M1615.3 588.9L1664.8 556.7M1668.8 554.2L1677.3 548.7M1683.0 544.9L1696.2 536.4M1707.3 529.2L1748.7 502.3M1127.5 918.3L1139.7 910.4M1144.2 907.4L1171.5 889.7M1191.0 877.0L1215.1 861.4M1235.1 848.4L1284.0 816.6M1302.7 804.5L1333.2 784.7M1352.9 771.9L1396.6 743.5M1447.9 710.2L1459.1 702.9M1475.5 692.3L1496.0 678.9M1550.8 643.4L1574.2 628.2M1591.1 617.2L1633.2 589.8M1639.5 585.7L1647.3 580.7M1657.6 574.0L1701.8 545.3M1129.8 921.9L1167.2 897.6M1182.4 887.7L1189.8 882.9M1209.2 870.3L1241.9 849.1M1259.0 838.0L1266.9 832.8M1297.7 812.8L1336.6 787.5M1341.0 784.7L1386.9 754.9M1421.9 732.1L1428.8 727.7M1490.0 687.9L1533.4 659.8M1548.7 649.8L1585.8 625.7M1619.9 603.6L1632.3 595.5M1650.7 583.6L1669.0 571.7M1134.5 929.1L1141.9 924.3M1148.8 919.8L1160.9 911.9M1226.7 869.2L1263.8 845.1M1279.1 835.2L1299.0 822.3M1314.3 812.3L1345.2 792.3M1378.9 770.4L1420.7 743.2M1441.2 729.9L1457.1 719.6M1459.3 718.2L1498.5 692.7M1553.1 657.2L1588.1 634.5M1601.9 625.6L1630.1 607.2M1646.0 596.9L1658.3 588.9M1667.2 583.1L1692.8 566.5M1704.6 558.9L1728.3 543.5M1737.3 537.6L1786.4 505.8M1140.2 937.9L1164.1 922.3M1173.5 916.2L1196.2 901.4M1201.2 898.2L1246.1 869.1M1265.7 856.3L1292.7 838.8M1299.5 834.4L1345.2 804.7M1362.7 793.3L1380.5 781.8M1395.2 772.2L1422.4 754.6M1514.3 694.9L1552.2 670.3M1561.8 664.0L1571.1 658.0M1586.5 648.0L1628.5 620.7M1642.4 611.7L1688.0 582.1M1707.6 569.4L1718.6 562.2M1731.0 554.2L1748.6 542.8M1142.9 942.2L1159.6 931.3M1196.9 907.1L1211.5 897.6M1226.6 887.8L1274.5 856.7M1294.5 843.7L1327.6 822.2M1330.0 820.7L1363.9 798.7M1377.2 790.0L1385.4 784.7M1388.0 783.0L1402.2 773.8M1408.6 769.6L1454.6 739.8M1465.4 732.7L1497.7 711.8M1503.5 708.0L1517.0 699.3M1522.5 695.7L1568.8 665.6M1572.2 663.4L1584.7 655.3M1589.2 652.4L1613.1 636.8M1629.0 626.5L1656.5 608.7M1719.8 567.5L1737.4 556.1M1148.8 951.1L1172.1 936.0M1177.8 932.3L1223.1 902.8M1230.7 897.9L1257.5 880.5M1268.5 873.4L1282.9 864.0M1290.0 859.4L1320.4 839.7M1320.4 839.6L1346.0 823.0M1347.5 822.1L1363.4 811.7M1380.7 800.5L1401.6 786.9M1406.9 783.5L1425.8 771.2M1488.8 730.3L1524.0 707.4M1526.4 705.9L1540.3 696.9M1545.7 693.4L1588.2 665.7M1600.5 657.8L1617.8 646.5M1660.9 618.5L1678.8 606.9M1739.2 567.7L1758.9 554.9M1153.4 958.3L1202.8 926.3M1216.3 917.5L1235.3 905.2M1241.0 901.4L1290.7 869.2M1291.6 868.6L1313.6 854.3M1317.5 851.8L1364.8 821.1M1370.0 817.7L1404.1 795.5M1417.9 786.6L1432.5 777.1M1450.8 765.2L1465.1 755.9M1470.2 752.6L1497.6 734.8M1509.3 727.3L1555.0 697.6M1564.8 691.2L1607.7 663.3M1608.1 663.1L1621.1 654.7M1652.2 634.4L1688.9 610.6M1691.2 609.1L1732.6 582.2M1741.1 576.7L1776.6 553.7M1156.1 962.5L1180.4 946.7M1183.1 945.0L1213.8 925.0M1225.4 917.5L1267.0 890.5M1334.4 846.7L1374.5 820.7M1385.7 813.4L1417.4 792.8M1419.8 791.2L1430.8 784.1M1449.1 772.2L1473.6 756.3M1484.9 748.9L1522.4 724.6M1539.1 713.8L1584.2 684.5M1590.9 680.1L1630.8 654.2M1670.2 628.6L1697.0 611.2M1714.0 600.1L1734.8 586.7M1745.5 579.7L1790.7 550.3M1161.1 970.1L1205.4 941.4M1249.6 912.7L1291.2 885.6M1297.6 881.5L1312.8 871.6M1333.1 858.5L1375.1 831.2M1386.2 824.0L1416.4 804.3M1425.0 798.7L1435.7 791.8M1454.9 779.3L1467.7 771.0M1538.2 725.2L1547.2 719.4M1547.4 719.3L1588.1 692.9M1591.3 690.8L1631.6 664.6M1634.9 662.5L1680.9 632.6M1729.9 600.7L1770.8 574.2M1166.3 978.2L1194.3 960.0M1211.0 949.1L1256.2 919.8M1270.5 910.5L1301.8 890.2M1415.5 816.3L1428.7 807.8M1486.2 770.4L1521.2 747.7M1522.1 747.1L1532.2 740.6M1544.1 732.8L1562.2 721.1M1571.6 715.0L1618.0 684.9M1635.5 673.4L1661.6 656.5M1710.4 624.8L1748.8 599.9M1766.1 588.7L1778.2 580.8M1237.1 940.0L1253.5 929.3M1258.1 926.3L1276.8 914.2M1277.9 913.4L1297.8 900.6M1311.9 891.4L1344.6 870.1M1350.9 866.0L1387.7 842.2M1402.7 832.4L1429.6 814.9M1435.6 811.1L1462.6 793.5M1538.2 744.4L1580.5 717.0M1624.7 688.2L1636.3 680.7M1636.4 680.6L1658.4 666.4M1721.5 625.4L1742.6 611.7M1219.0 959.2L1266.6 928.3M1348.6 875.1L1366.8 863.2M1496.6 778.9L1514.4 767.4M1522.1 762.4L1539.1 751.3M1554.0 741.7L1564.8 734.6M1584.1 722.1L1621.2 698.0M1628.5 693.3L1638.6 686.7M1702.9 644.9L1750.0 614.3M1761.2 607.1L1790.5 588.0M1179.2 998.0L1222.7 969.8M1279.2 933.1L1287.0 928.1M1298.2 920.8L1311.3 912.3M1330.6 899.7L1345.4 890.1M1354.1 884.5L1379.5 868.0M1379.5 868.0L1417.3 843.4M1480.1 802.6L1494.4 793.3M1494.5 793.3L1527.4 772.0M1535.0 767.0L1560.5 750.4M1565.5 747.2L1615.0 715.1M1619.4 712.2L1656.4 688.2M1658.6 686.7L1684.5 669.9M1705.2 656.5L1725.6 643.2M1735.6 636.7L1759.9 621.0M1774.5 611.4L1816.0 584.5M1183.5 1004.6L1209.9 987.4M1229.2 974.9L1268.4 949.4M1282.5 940.3L1294.8 932.3M1307.6 924.0L1334.9 906.2M1344.9 899.8L1378.1 878.2M1425.5 847.4L1475.6 814.9M1487.2 807.3L1503.7 796.6M1548.9 767.3L1572.7 751.8M1592.3 739.1L1627.5 716.2M1645.7 704.4L1667.4 690.3M1688.1 676.9L1708.1 663.9M1718.1 657.4L1752.3 635.2M1771.8 622.5L1778.6 618.1M1780.1 617.1L1805.6 600.5M1187.9 1011.3L1203.4 1001.2M1221.3 989.6L1269.9 958.0M1277.4 953.1L1307.8 933.4M1313.3 929.9L1320.1 925.4M1325.4 922.0L1370.6 892.7M1413.6 864.7L1425.1 857.3M1441.4 846.7L1471.0 827.4M1549.0 776.8L1587.8 751.6M1602.4 742.1L1610.7 736.7M1628.1 725.4L1662.3 703.2M1668.9 698.9L1715.8 668.5M1726.9 661.2L1748.5 647.2M1190.6 1015.5L1215.5 999.3M1217.8 997.8L1259.8 970.5M1276.4 959.8L1288.4 952.0M1288.6 951.8L1332.1 923.6M1349.5 912.3L1366.4 901.3M1446.3 849.4L1478.3 828.6M1499.0 815.2L1546.2 784.6M1566.4 771.4L1605.8 745.8M1610.5 742.7L1632.2 728.7M1681.2 696.8L1709.6 678.4M1724.3 668.9L1764.5 642.8M1195.7 1023.4L1239.4 995.0M1254.9 985.0L1279.4 969.1M1291.3 961.4L1302.2 954.3M1308.7 950.0L1317.6 944.3M1332.6 934.5L1366.2 912.7M1370.5 909.9L1413.2 882.2M1426.2 873.7L1457.5 853.4M1465.8 848.0L1479.0 839.5M1497.1 827.7L1544.5 796.9M1548.1 794.6L1577.0 775.8M1618.6 748.8L1650.5 728.1M1663.9 719.4L1704.9 692.8M1712.5 687.8L1762.0 655.7M1778.6 644.9L1790.2 637.3M1794.9 634.3L1807.3 626.3M1199.3 1028.9L1217.3 1017.2M1225.3 1012.0L1232.1 1007.6M1237.6 1004.0L1258.4 990.5M1288.4 971.1L1327.3 945.8M1337.6 939.1L1354.5 928.1M1406.2 894.5L1418.3 886.7M1428.8 879.9L1440.6 872.2M1447.3 867.9L1483.4 844.4M1496.5 835.9L1519.7 820.8M1582.5 780.0L1592.6 773.5M1634.7 746.1L1677.1 718.6M1694.6 707.3L1742.1 676.4M1747.6 672.8L1783.7 649.4M1788.6 646.2L1799.6 639.0M1204.0 1036.1L1222.8 1023.9M1236.2 1015.2L1265.8 996.0M1283.7 984.4L1299.6 974.1M1310.8 966.8L1328.0 955.6M1331.1 953.6L1353.1 939.3M1371.7 927.2L1382.2 920.4M1386.8 917.4L1416.6 898.0M1417.2 897.7L1448.6 877.3M1461.2 869.1L1501.6 842.9M1543.6 815.6L1567.5 800.0M1576.4 794.3L1619.7 766.1M1640.5 752.7L1670.7 733.1M1685.7 723.3L1734.2 691.8M1754.6 678.6L1770.7 668.1M1782.6 660.4L1799.4 649.4M1209.8 1045.2L1237.9 1026.9M1305.9 982.8L1347.5 955.8M1353.0 952.2L1381.4 933.8M1401.1 921.0L1423.4 906.5M1423.9 906.1L1453.8 886.7M1460.3 882.5L1488.1 864.4M1489.6 863.5L1515.7 846.5M1523.0 841.8L1552.8 822.4M1580.2 804.7L1599.2 792.3M1606.5 787.5L1645.6 762.2M1656.0 755.4L1662.9 750.9M1665.7 749.1L1688.5 734.3M1696.9 728.9L1745.7 697.2M1754.9 691.2L1803.6 659.6M1236.6 1038.0L1266.6 1018.5M1278.8 1010.6L1318.0 985.2M1325.8 980.1L1344.9 967.7M1364.1 955.2L1382.9 943.0M1430.3 912.2L1442.1 904.6M1446.5 901.7L1456.5 895.2M1465.2 889.6L1503.0 865.0M1572.6 819.8L1599.9 802.1M1618.6 789.9L1636.5 778.3M1652.0 768.2L1683.7 747.6M1701.8 735.9L1729.5 717.9M1739.3 711.5L1757.5 699.7M1252.9 1037.7L1266.8 1028.7M1271.8 1025.4L1300.9 1006.5M1313.1 998.6L1340.3 980.9M1446.9 911.7L1456.6 905.4M1521.6 863.2L1567.1 833.7M1576.5 827.5L1603.1 810.2M1634.7 789.8L1641.9 785.1M1703.0 745.4L1719.5 734.7M1737.9 722.7L1746.6 717.0M1748.5 715.9L1772.1 700.5M1792.5 687.3L1830.5 662.6M1222.5 1064.6L1233.4 1057.5M1245.6 1049.6L1266.6 1035.9M1284.0 1024.6L1296.0 1016.9M1329.7 994.9L1378.7 963.1M1396.8 951.4L1438.1 924.6M1454.0 914.2L1504.2 881.7M1516.7 873.5L1532.9 863.0M1535.6 861.3L1569.5 839.2M1587.5 827.6L1594.6 822.9M1615.0 809.7L1633.3 797.8M1651.4 786.0L1692.7 759.2M1711.5 747.0L1744.8 725.4M1744.9 725.3L1778.4 703.6M1794.5 693.1L1806.2 685.5M1810.9 682.5L1821.0 675.9M1823.3 674.4L1864.7 647.5M1227.9 1073.0L1260.0 1052.2M1265.0 1049.0L1309.0 1020.4M1316.7 1015.4L1348.6 994.6M1369.3 981.2L1383.9 971.7M1396.1 963.8L1423.5 946.0M1438.4 936.3L1467.3 917.6M1473.9 913.3L1516.4 885.7M1526.2 879.4L1545.5 866.8M1550.8 863.3L1580.8 843.9M1585.4 840.9L1613.9 822.3M1683.5 777.2L1701.0 765.8M1702.5 764.8L1710.3 759.8M1728.3 748.1L1749.7 734.2M1758.9 728.2L1772.6 719.3M1780.3 714.3L1816.7 690.7M1828.9 682.7L1845.1 672.2M1231.4 1078.4L1263.1 1057.8M1282.5 1045.3L1329.3 1014.9M1367.8 989.9L1395.8 971.7M1395.8 971.7L1411.2 961.7M1424.2 953.2L1451.7 935.4M1471.1 922.8L1481.7 915.9M1482.3 915.5L1515.0 894.3M1546.5 873.9L1579.4 852.5M1580.3 851.9L1626.5 821.9M1694.8 777.5L1729.7 754.9M1746.6 743.9L1773.5 726.4M1790.5 715.3L1803.5 706.9M1821.7 695.1L1828.7 690.6M1234.4 1083.0L1266.2 1062.3M1270.0 1059.8L1283.3 1051.3M1383.7 986.0L1414.1 966.3M1433.7 953.6L1443.9 946.9M1519.6 897.8L1547.8 879.4M1554.7 875.0L1592.3 850.5M1602.0 844.3L1627.0 828.0M1642.0 818.3L1655.6 809.5M1681.1 792.9L1699.4 781.0M1736.2 757.1L1776.8 730.7M1777.9 730.1L1811.6 708.1M1821.8 701.6L1851.2 682.4M1238.8 1089.8L1259.0 1076.7M1276.9 1065.1L1305.9 1046.2M1320.8 1036.6L1344.2 1021.3M1378.7 999.0L1425.0 968.9M1488.6 927.6L1523.7 904.8M1536.4 896.5L1554.8 884.6M1572.3 873.2L1612.0 847.4M1629.6 836.0L1654.2 820.0M1661.8 815.1L1706.7 785.9M1721.1 776.6L1751.6 756.8M1770.0 744.8L1792.3 730.3M1806.7 721.0L1835.1 702.5M1245.2 1099.6L1294.2 1067.8M1300.0 1064.0L1311.3 1056.7M1318.8 1051.8L1347.4 1033.2M1422.6 984.4L1432.3 978.1M1452.2 965.2L1475.9 949.8M1532.7 912.9L1553.6 899.3M1553.8 899.2L1588.8 876.5M1602.5 867.6L1612.5 861.1M1631.4 848.8L1658.7 831.1M1679.1 817.8L1713.5 795.5M1714.8 794.7L1753.7 769.4M1757.0 767.2L1806.0 735.4M1823.3 724.2L1871.3 693.0" stroke="#dadcdf" stroke-width="0.75" fill="none"/>
<path clip-path="url(#cR2)" d="M1446.2 108.3L1473.4 150.2M1481.9 163.4L1491.3 177.8M1496.0 184.9L1524.6 229.1M1535.3 245.5L1567.8 295.5M1603.1 349.9L1622.5 379.8M1631.1 393.1L1648.5 419.8M1661.5 439.9L1680.8 469.5M1687.3 479.6L1695.8 492.7M1720.1 530.1L1728.3 542.8M1740.4 561.3L1763.1 596.4M1765.1 599.4L1781.4 624.5M1791.7 640.4L1807.9 665.3M1813.4 673.7L1825.7 692.7M1439.8 112.4L1459.7 143.1M1464.5 150.4L1470.0 158.9M1479.2 173.0L1509.8 220.2M1513.9 226.5L1527.2 247.0M1534.5 258.2L1557.8 294.1M1563.4 302.8L1576.0 322.2M1582.2 331.8L1606.9 369.8M1615.8 383.5L1622.6 393.9M1624.1 396.3L1633.7 411.0M1636.2 414.9L1650.2 436.4M1662.6 455.5L1673.9 472.9M1676.4 476.7L1700.1 513.2M1707.9 525.3L1735.3 567.4M1744.4 581.5L1766.0 614.8M1786.9 646.9L1801.8 669.9M1810.5 683.3L1836.8 723.7M1427.3 120.5L1446.2 149.6M1449.7 154.9L1457.7 167.2M1511.6 250.2L1542.7 298.1M1575.4 348.5L1597.2 382.1M1605.6 395.1L1622.0 420.3M1637.8 444.6L1658.4 476.4M1694.8 532.4L1705.1 548.2M1713.9 561.8L1727.5 582.7M1728.6 584.4L1747.7 613.9M1772.7 652.3L1783.6 669.1M1792.2 682.4L1798.9 692.7M1416.3 127.7L1436.4 158.7M1442.2 167.5L1447.7 176.1M1459.8 194.6L1474.0 216.5M1477.8 222.4L1508.6 269.9M1520.1 287.5L1541.5 320.5M1549.0 332.1L1554.3 340.2M1564.4 355.7L1584.7 387.0M1584.9 387.4L1594.0 401.2M1602.9 414.9L1635.3 464.9M1644.3 478.7L1649.0 486.0M1691.3 551.1L1709.1 578.6M1712.1 583.1L1718.5 593.1M1726.4 605.3L1750.7 642.6M1784.6 694.8L1797.3 714.4M1806.6 728.7L1836.3 774.4M1499.0 282.0L1516.3 308.5M1551.9 363.3L1557.2 371.4M1557.3 371.7L1564.5 382.7M1575.9 400.3L1605.3 445.5M1608.3 450.2L1634.0 489.8M1672.0 548.3L1690.8 577.2M1698.1 588.5L1714.1 613.2M1723.5 627.6L1747.5 664.5M1760.1 684.0L1779.9 714.4M1411.1 174.3L1429.1 201.9M1440.8 219.9L1454.6 241.3M1482.8 284.7L1498.3 308.5M1504.0 317.3L1522.0 345.0M1531.6 359.8L1554.8 395.4M1561.5 405.8L1593.1 454.4M1597.0 460.5L1628.5 509.0M1643.6 532.2L1662.6 561.5M1663.2 562.4L1682.0 591.4M1684.4 595.0L1714.4 641.2M1720.4 650.5L1741.7 683.3M1743.2 685.6L1765.9 720.6M1767.1 722.5L1780.3 742.7M1380.2 151.1L1401.8 184.3M1404.3 188.2L1428.5 225.6M1439.6 242.6L1455.7 267.4M1459.6 273.4L1488.7 318.1M1496.3 329.9L1522.3 369.9M1526.1 375.8L1541.1 398.8M1623.5 525.8L1628.9 534.1M1641.9 554.1L1647.3 562.4M1657.6 578.3L1683.3 617.8M1683.4 618.0L1697.9 640.3M1699.0 642.1L1713.2 663.9M1723.2 679.4L1754.9 728.2M1766.4 745.8L1796.8 792.6M1371.8 156.6L1381.0 170.7M1385.3 177.4L1395.3 192.7M1437.5 257.8L1444.4 268.3M1455.9 286.1L1478.2 320.3M1481.4 325.3L1497.3 349.8M1507.1 364.9L1515.4 377.7M1519.5 384.0L1524.3 391.4M1532.9 404.7L1557.5 442.5M1562.0 449.4L1579.9 476.9M1590.1 492.7L1608.9 521.6M1612.4 527.1L1624.1 545.1M1661.6 602.8L1686.7 641.5M1690.4 647.2L1695.0 654.3M1707.7 673.8L1715.3 685.4M1411.5 246.7L1422.9 264.3M1463.7 327.0L1496.2 377.1M1509.2 397.2L1534.4 435.9M1543.5 450.0L1562.0 478.5M1592.2 524.9L1616.3 562.0M1625.7 576.5L1646.2 608.2M1655.3 622.2L1672.2 648.2M1685.4 668.5L1703.0 695.6M1704.1 697.3L1731.8 739.9M1732.2 740.6L1759.2 782.1M1368.4 204.8L1388.2 235.3M1397.4 249.6L1401.9 256.5M1436.6 309.9L1460.2 346.2M1462.8 350.2L1476.2 370.8M1483.3 381.8L1511.3 424.9M1522.0 441.4L1545.9 478.2M1550.5 485.3L1564.1 506.2M1574.2 521.7L1582.3 534.3M1585.6 539.4L1590.4 546.7M1591.0 547.6L1599.1 560.2M1611.3 578.8L1636.8 618.2M1647.6 634.9L1667.4 665.2M1680.9 686.0L1696.2 709.6M1709.5 730.1L1740.9 778.5M1340.5 176.9L1363.3 212.1M1375.3 230.6L1384.8 245.2M1398.3 266.0L1417.0 294.8M1428.6 312.6L1449.9 345.4M1460.6 361.9L1484.0 397.9M1484.8 399.2L1496.8 417.7M1505.1 430.4L1522.4 457.0M1529.7 468.3L1559.3 513.8M1574.2 536.8L1604.6 583.6M1648.0 650.5L1680.5 700.5M1684.6 706.9L1696.1 724.5M1702.9 735.0L1714.5 752.8M1720.9 762.7L1729.6 776.2M1731.3 778.8L1738.2 789.4M1356.3 232.0L1384.5 275.5M1393.4 289.2L1420.9 331.6M1456.5 386.3L1482.2 425.9M1482.8 426.9L1505.5 461.8M1507.5 464.9L1530.9 500.9M1534.0 505.7L1544.4 521.7M1556.2 540.0L1580.2 576.8M1588.6 589.8L1618.1 635.2M1628.7 651.5L1649.8 684.0M1656.5 694.3L1675.9 724.3M1679.7 730.1L1690.1 746.1M1690.2 746.2L1719.2 790.9M1317.4 191.9L1338.3 224.1M1374.3 279.6L1393.3 308.8M1404.0 325.2L1411.7 337.1M1415.2 342.6L1429.6 364.7M1436.3 375.0L1468.9 425.2M1478.9 440.6L1503.1 477.9M1515.7 497.3L1537.9 531.4M1550.9 551.5L1580.1 596.5M1591.1 613.3L1599.5 626.3M1610.5 643.2L1624.8 665.2M1631.1 674.9L1660.8 720.7M1673.3 739.9L1682.6 754.2M1687.6 762.0L1697.7 777.4M1702.3 784.6L1720.1 812.1M1307.1 198.6L1318.5 216.1M1327.8 230.4L1332.9 238.2M1344.3 255.8L1373.5 300.8M1403.6 347.1L1426.5 382.3M1452.1 421.7L1460.5 434.7M1510.6 511.9L1536.2 551.3M1538.6 555.0L1544.1 563.5M1594.3 640.7L1603.2 654.4M1605.1 657.3L1632.2 699.2M1633.6 701.2L1653.4 731.7M1664.2 748.4L1669.8 757.0M1671.1 759.0L1689.8 787.9M1297.1 205.1L1307.5 221.0M1319.0 238.9L1327.8 252.3M1337.7 267.5L1355.2 294.6M1358.7 300.0L1383.4 338.0M1392.8 352.4L1398.3 361.0M1423.1 399.1L1437.7 421.5M1444.7 432.4L1475.3 479.5M1484.2 493.1L1510.3 533.4M1517.0 543.6L1536.8 574.2M1542.5 582.9L1558.0 606.8M1561.0 611.4L1586.5 650.7M1598.6 669.3L1626.9 712.9M1628.6 715.5L1654.0 754.7M1664.6 771.1L1673.8 785.1M1686.8 805.2L1709.7 840.4M1284.3 213.4L1300.1 237.8M1312.2 256.4L1338.0 296.1M1345.8 308.0L1353.9 320.6M1367.5 341.5L1388.7 374.2M1391.3 378.2L1415.7 415.7M1425.5 430.9L1437.1 448.7M1443.7 458.9L1466.2 493.6M1478.6 512.7L1504.9 553.2M1505.1 553.4L1524.6 583.4M1525.6 585.0L1548.9 620.8M1560.7 639.0L1579.5 668.0M1590.3 684.6L1620.0 730.3M1632.7 750.0L1643.0 765.8M1670.8 808.6L1691.0 839.7M1272.8 220.9L1277.2 227.6M1282.9 236.4L1291.0 248.8M1302.0 265.8L1314.8 285.6M1322.0 296.6L1327.2 304.6M1328.7 307.0L1344.6 331.3M1345.8 333.2L1360.7 356.2M1374.3 377.2L1383.8 391.7M1384.8 393.3L1416.4 441.9M1451.5 495.9L1475.8 533.5M1484.1 546.1L1500.8 571.9M1508.0 582.9L1528.3 614.3M1529.5 616.1L1561.8 665.9M1567.3 674.3L1593.0 713.8M1604.0 730.9L1619.2 754.2M1628.9 769.1L1650.7 802.7M1650.9 803.1L1660.2 817.4M1373.2 390.2L1378.6 398.4M1389.2 414.8L1415.5 455.4M1417.6 458.5L1436.7 488.0M1484.9 562.1L1508.3 598.2M1514.3 607.4L1531.9 634.5M1548.2 659.6L1562.8 682.2M1574.7 700.5L1604.5 746.4M1616.7 765.2L1633.8 791.4M1637.1 796.6L1650.3 816.9M1251.2 234.9L1265.1 256.4M1270.8 265.2L1303.0 314.8M1316.5 335.6L1348.0 384.1M1361.0 404.1L1381.4 435.4M1412.5 483.4L1434.5 517.3M1444.0 531.9L1452.1 544.3M1458.3 553.9L1467.8 568.5M1481.1 589.1L1489.3 601.7M1495.3 610.8L1516.8 644.0M1519.9 648.8L1542.3 683.3M1554.9 702.7L1579.5 740.6M1587.4 752.8L1603.7 777.8M1264.3 281.3L1272.0 293.2M1299.5 335.5L1330.2 382.8M1335.8 391.3L1343.1 402.6M1353.3 418.4L1362.4 432.4M1390.7 475.9L1399.0 488.7M1402.6 494.3L1416.5 515.6M1460.9 584.0L1492.8 633.2M1503.8 650.1L1521.8 677.9M1524.8 682.5L1536.1 699.8M1546.1 715.2L1554.1 727.6M1558.0 733.6L1588.6 780.7M1598.9 796.5L1630.4 845.1M1231.9 247.5L1241.6 262.5M1250.2 275.7L1269.2 305.0M1302.1 355.7L1307.9 364.6M1345.9 423.1L1369.2 459.0M1450.9 584.7L1474.0 620.3M1486.9 640.2L1512.4 679.4M1520.5 691.9L1527.1 702.0M1537.2 717.6L1545.1 729.8M1552.7 741.5L1564.5 759.6M1576.4 778.0L1601.9 817.3M1613.1 834.5L1630.2 860.9M1217.5 256.8L1246.9 302.1M1251.0 308.3L1261.4 324.4M1292.4 372.1L1317.1 410.1M1351.6 463.3L1368.3 489.0M1372.0 494.7L1391.4 524.5M1398.5 535.5L1404.6 544.8M1442.6 603.4L1447.5 610.9M1449.2 613.6L1469.3 644.5M1476.4 655.5L1495.7 685.1M1495.7 685.2L1527.3 733.8M1539.4 752.4L1562.3 787.7M1606.1 855.2L1629.8 891.6M1206.3 264.0L1219.7 284.7M1232.3 304.0L1264.0 352.9M1274.3 368.7L1293.5 398.2M1304.1 414.6L1323.8 444.9M1331.5 456.8L1345.5 478.4M1378.2 528.8L1393.1 551.6M1400.2 562.6L1428.3 605.9M1432.0 611.6L1447.5 635.4M1456.4 649.1L1488.4 698.4M1495.3 709.0L1511.3 733.7M1533.5 767.8L1554.4 800.1M1560.7 809.7L1572.0 827.2M1576.6 834.3L1585.9 848.6M1592.5 858.7L1612.9 890.1M1195.9 270.8L1217.9 304.7M1247.4 350.2L1261.7 372.2M1296.2 425.2L1313.2 451.4M1319.3 460.9L1334.2 483.9M1337.4 488.7L1359.5 522.7M1360.2 523.9L1391.0 571.2M1420.6 616.9L1452.8 666.4M1454.6 669.2L1463.8 683.3M1469.8 692.6L1493.3 728.8M1505.4 747.3L1510.5 755.2M1512.0 757.5L1520.1 770.1M1564.1 837.8L1580.4 862.9M1185.9 277.3L1215.3 322.5M1227.3 341.1L1236.4 355.1M1248.7 374.0L1274.6 413.9M1275.6 415.3L1280.6 423.0M1290.6 438.5L1304.1 459.2M1304.1 459.3L1336.7 509.6M1387.6 587.9L1404.1 613.3M1410.1 622.5L1435.0 660.9M1448.4 681.5L1476.9 725.5M1482.4 733.9L1509.5 775.5M1558.3 850.7L1589.6 899.0M1179.0 281.8L1198.2 311.5M1239.7 375.4L1244.5 382.8M1249.4 390.4L1272.9 426.4M1282.0 440.5L1289.0 451.2M1325.8 508.0L1344.2 536.3M1350.7 546.2L1375.9 585.0M1385.9 600.5L1412.2 641.0M1444.6 690.9L1471.0 731.6M1476.2 739.5L1492.8 765.2M1501.1 777.8L1520.9 808.3M1570.9 885.4L1595.7 923.6M1184.7 320.4L1209.5 358.6M1212.4 363.2L1231.4 392.3M1236.3 399.9L1253.6 426.6M1267.0 447.2L1299.0 496.5M1311.4 515.5L1337.6 555.8M1342.7 563.8L1363.1 595.1M1373.1 610.6L1396.7 646.9M1529.3 851.1L1544.0 873.7M1156.8 296.2L1189.2 346.1M1199.9 362.6L1222.5 397.4M1226.6 403.6L1255.7 448.5M1274.9 478.0L1297.4 512.7M1303.5 522.1L1313.1 536.9M1313.1 536.9L1333.8 568.7M1336.3 572.6L1349.9 593.5M1353.4 599.0L1368.0 621.4M1393.5 660.8L1413.5 691.5M1421.4 703.7L1441.3 734.3M1453.7 753.3L1485.5 802.3M1493.8 815.2L1523.9 861.5M1536.1 880.3L1540.7 887.4M1172.2 351.2L1185.4 371.4M1188.8 376.7L1196.2 388.0M1199.8 393.7L1230.8 441.4M1233.1 445.0L1248.0 467.9M1256.8 481.4L1280.1 517.3M1282.1 520.4L1302.9 552.4M1312.8 567.6L1318.5 576.4M1327.6 590.4L1358.2 637.5M1367.6 652.0L1383.5 676.5M1410.6 718.2L1436.2 757.7M1444.9 771.1L1463.7 800.1M1472.7 813.8L1488.3 837.9M1524.8 894.1L1538.9 915.8M1134.0 311.0L1148.4 333.2M1159.2 349.7L1177.1 377.3M1180.9 383.2L1207.2 423.7M1208.8 426.1L1218.4 441.0M1227.2 454.5L1237.8 470.9M1266.8 515.5L1293.6 556.7M1315.3 590.1L1322.2 600.8M1327.6 609.0L1355.9 652.6M1360.0 658.9L1365.8 667.9M1375.2 682.4L1402.2 724.0M1412.1 739.1L1423.9 757.3M1427.3 762.6L1433.0 771.4M1445.8 791.1L1464.1 819.3M1469.0 826.9L1489.1 857.8M1499.6 874.0L1506.8 885.0M1118.8 320.9L1132.2 341.6M1139.5 352.9L1156.7 379.2M1167.8 396.4L1195.3 438.8M1198.8 444.1L1218.5 474.5M1226.5 486.7L1253.8 528.9M1259.9 538.3L1288.5 582.3M1329.9 646.0L1335.8 655.1M1340.4 662.1L1362.7 696.5M1365.7 701.1L1373.9 713.8M1376.3 717.4L1393.6 744.0M1399.9 753.8L1419.2 783.5M1422.7 788.8L1428.6 798.0M1430.7 801.2L1439.7 815.1M1446.1 824.9L1471.2 863.6M1483.2 882.0L1489.6 891.8M1502.7 912.1L1525.5 947.1M1126.1 356.3L1155.9 402.1M1167.4 419.9L1186.3 449.0M1197.8 466.8L1209.4 484.6M1209.8 485.3L1218.2 498.1M1230.8 517.6L1245.2 539.7M1258.4 560.1L1275.1 585.7M1276.5 587.9L1289.1 607.3M1302.0 627.2L1333.9 676.4M1337.6 682.0L1367.4 727.9M1393.6 768.1L1410.1 793.6M1423.5 814.2L1454.5 862.1M1467.2 881.6L1491.2 918.4M1102.5 331.5L1126.4 368.2M1136.8 384.1L1143.8 395.0M1144.7 396.4L1152.1 407.8M1163.6 425.5L1196.2 475.7M1206.2 491.0L1215.7 505.7M1221.5 514.7L1250.3 558.9M1262.4 577.6L1267.4 585.4M1310.1 651.1L1332.2 685.1M1343.4 702.3L1374.5 750.3M1383.6 764.2L1392.7 778.3M1401.5 791.7L1432.3 839.3M1436.1 845.2L1454.8 873.8M1467.6 893.6L1497.2 939.2M1085.6 342.5L1115.0 387.7M1125.2 403.4L1130.8 412.0M1133.8 416.7L1141.5 428.5M1176.7 482.8L1202.3 522.1M1208.4 531.5L1240.6 581.2M1253.2 600.6L1259.8 610.7M1272.1 629.6L1279.8 641.5M1288.7 655.3L1314.4 694.9M1323.8 709.2L1353.9 755.6M1367.5 776.5L1399.6 826.0M1410.6 842.8L1438.3 885.5M1451.0 905.2L1457.8 915.5M1462.8 923.3L1477.6 946.0M1080.0 346.1L1097.8 373.5M1099.1 375.6L1109.5 391.6M1122.2 411.2L1144.5 445.5M1153.2 458.9L1175.3 493.0M1198.9 529.3L1220.8 563.0M1224.1 568.1L1253.4 613.1M1254.1 614.2L1273.0 643.3M1278.8 652.3L1286.2 663.7M1297.7 681.4L1310.3 700.8M1316.4 710.3L1323.1 720.5M1334.4 737.9L1344.3 753.2M1348.6 759.8L1362.0 780.4M1399.3 837.9L1419.7 869.3M1452.2 919.3L1468.0 943.7M1069.2 353.1L1083.1 374.4M1088.1 382.2L1114.6 423.0M1124.1 437.6L1141.5 464.4M1176.6 518.4L1181.6 526.3M1191.1 540.7L1210.4 570.5M1221.8 588.1L1243.1 620.9M1247.5 627.6L1272.0 665.5M1277.7 674.2L1303.7 714.2M1313.3 728.9L1338.7 768.2M1351.7 788.1L1375.6 824.8M1454.8 946.9L1481.3 987.7M1088.1 412.7L1098.6 428.9M1105.6 439.8L1114.8 454.0M1118.8 460.1L1139.3 491.6M1147.7 504.6L1174.7 546.1M1182.1 557.6L1188.9 568.0M1193.4 574.9L1202.3 588.6M1213.8 606.4L1235.1 639.1M1317.7 766.3L1343.6 806.3M1347.4 812.1L1366.6 841.7M1378.1 859.4L1407.7 905.0M1416.9 919.0L1432.7 943.5M1437.9 951.5L1462.6 989.4M1049.5 381.4L1059.4 396.5M1070.4 413.6L1081.2 430.1M1081.3 430.4L1102.7 463.2M1103.4 464.4L1115.9 483.6M1127.9 502.1L1139.5 520.0M1145.0 528.4L1169.4 566.0M1173.3 572.0L1191.9 600.7M1195.2 605.7L1220.7 645.0M1227.6 655.6L1241.8 677.5M1249.6 689.4L1264.9 713.1M1272.5 724.8L1282.1 739.5M1294.0 757.8L1324.0 804.1M1325.3 806.0L1345.1 836.5M1350.7 845.1L1380.0 890.3M1384.4 897.0L1394.4 912.5M1406.4 930.9L1432.1 970.5M1032.8 376.8L1053.2 408.2M1089.1 463.6L1106.7 490.6M1117.4 507.1L1139.9 541.7M1144.4 548.6L1157.2 568.3M1211.2 651.6L1222.8 669.5M1232.6 684.5L1249.5 710.6M1316.2 813.3L1320.7 820.1M1326.1 828.5L1332.0 837.6M1343.9 855.9L1364.7 887.9M1368.4 893.6L1385.9 920.6M1389.8 926.6L1413.1 962.4M1421.6 975.6L1453.5 1024.7M1045.9 415.0L1053.1 426.1M1060.9 438.2L1072.6 456.1M1077.4 463.5L1106.9 508.9M1128.7 542.4L1145.3 568.1M1150.6 576.3L1156.1 584.8M1178.2 618.7L1190.0 636.9M1197.2 648.0L1217.2 678.8M1262.5 748.6L1276.3 769.9M1282.7 779.6L1311.6 824.2M1316.6 831.9L1326.0 846.3M1368.6 911.9L1389.0 943.3M1035.5 427.0L1058.0 461.6M1066.9 475.2L1092.8 515.2M1100.0 526.3L1132.4 576.2M1143.0 592.4L1171.1 635.8M1180.6 650.4L1212.0 698.7M1224.3 717.7L1241.0 743.4M1247.8 753.9L1277.4 799.4M1288.7 816.8L1306.2 843.8M1317.2 860.7L1332.9 884.9M1358.9 925.0L1374.9 949.6M1376.5 952.0L1404.5 995.2M1011.7 406.4L1017.4 415.2M1021.7 421.9L1042.3 453.7M1045.4 458.3L1067.8 492.9M1081.2 513.6L1094.0 533.2M1128.5 586.3L1155.4 627.7M1155.7 628.3L1184.2 672.1M1192.8 685.3L1209.2 710.6M1220.4 727.9L1234.7 749.9M1260.3 789.3L1283.2 824.5M1283.3 824.7L1309.4 864.9M1311.1 867.6L1334.9 904.1M1342.1 915.3L1347.0 922.8M1356.5 937.5L1377.9 970.5M1385.1 981.4L1392.6 993.0M988.0 405.9L997.5 420.6M1007.3 435.7L1031.5 473.0M1041.0 487.6L1072.2 535.6M1104.9 585.9L1118.6 607.1M1130.7 625.7L1138.6 637.8M1146.6 650.2L1163.4 676.1M1166.2 680.3L1191.4 719.2M1200.7 733.5L1206.4 742.3M1282.9 860.1L1301.6 888.9M1305.6 895.0L1329.9 932.4M977.8 412.5L1007.5 458.3M1020.9 478.9L1029.7 492.4M1036.4 502.8L1051.7 526.4M1062.4 542.8L1094.3 591.9M1097.2 596.3L1125.0 639.2M1128.2 644.1L1140.3 662.8M1168.4 706.1L1199.0 753.1M1201.2 756.4L1218.0 782.4M1228.1 797.9L1259.6 846.5M1273.1 867.2L1284.8 885.3M1290.3 893.7L1305.8 917.6M1333.0 959.4L1355.6 994.3M1357.1 996.6L1368.0 1013.3M969.0 418.2L998.2 463.2M1002.2 469.4L1034.3 518.9M1038.5 525.3L1061.2 560.3M1065.8 567.3L1082.1 592.4M1093.4 609.8L1118.3 648.2M1126.1 660.2L1141.5 684.0M1143.5 687.1L1157.1 708.0M1157.3 708.3L1176.5 737.9M1183.1 747.9L1189.3 757.5M1191.0 760.2L1196.5 768.7M1208.4 786.9L1240.1 835.8M1251.8 853.8L1265.9 875.5M1299.0 926.5L1324.6 965.9M1331.6 976.6L1350.0 1004.9M1357.9 1017.1L1388.7 1064.6M972.3 448.8L983.5 466.1M994.0 482.4L1018.6 520.2M1049.2 567.3L1068.4 596.8M1071.7 602.0L1091.8 632.9M1101.9 648.4L1108.2 658.2M1111.4 663.0L1127.1 687.3M1137.5 703.3L1152.3 726.0M1160.3 738.4L1181.9 771.7M1215.9 823.9L1235.7 854.5M1248.3 873.9L1258.7 889.9M1268.7 905.3L1283.8 928.5M943.6 434.7L957.7 456.4M960.3 460.4L978.5 488.5M980.5 491.5L1005.6 530.2M1005.8 530.6L1021.7 555.1M1031.4 570.0L1049.3 597.5M1052.2 602.0L1081.0 646.4M1086.0 654.1L1116.8 701.5M1174.7 790.6L1185.6 807.4M1186.3 808.5L1209.1 843.6M1216.5 855.0L1241.0 892.8M1244.0 897.4L1260.2 922.3M1262.1 925.2L1271.7 939.9M1282.6 956.7L1299.3 982.5M1305.5 992.0L1313.8 1004.8M1323.2 1019.4L1343.5 1050.6M938.1 438.3L964.0 478.2M969.9 487.3L999.0 532.1M1001.1 535.3L1009.9 548.9M1017.5 560.6L1022.8 568.7M1035.4 588.1L1063.3 631.0M1104.3 694.2L1134.7 741.0M1136.6 744.0L1164.6 787.1M1168.8 793.6L1173.8 801.2M1181.0 812.4L1191.4 828.3M1214.9 864.5L1231.1 889.5M1232.9 892.2L1245.6 911.8M1247.1 914.0L1267.2 945.1M1270.9 950.8L1295.8 989.1M1308.3 1008.3L1329.2 1040.6M924.4 447.1L937.4 467.1M945.7 479.8L951.3 488.4M952.9 490.9L961.4 504.1M968.9 515.5L990.9 549.5M1069.5 670.5L1089.4 701.2M1095.4 710.3L1113.3 737.9M1159.8 809.5L1174.7 832.4M1174.9 832.8L1194.6 863.1M1205.1 879.3L1210.2 887.1M1220.0 902.2L1248.5 946.1M1256.2 958.0L1275.3 987.4M1285.8 1003.6L1317.3 1052.0M945.2 503.1L955.2 518.6M955.9 519.5L970.2 541.6M975.6 549.9L1004.9 595.1M1033.1 638.5L1044.7 656.3M1048.8 662.6L1073.0 699.9M1082.4 714.4L1090.1 726.3M1098.2 738.8L1118.2 769.5M1143.9 809.1L1150.7 819.6M1185.9 873.8L1192.8 884.5M1205.2 903.5L1226.6 936.4M1274.8 1010.7L1304.8 1056.8M900.4 462.7L910.8 478.7M916.2 486.9L936.8 518.7M949.3 537.9L966.3 564.2M1001.3 618.0L1028.4 659.7M1042.2 680.9L1073.7 729.4M1086.8 749.6L1117.7 797.2M1123.6 806.4L1153.7 852.8M1164.9 869.9L1177.4 889.1M1178.8 891.4L1190.6 909.6M1209.4 938.5L1224.2 961.3M1224.3 961.4L1244.3 992.1M1244.7 992.8L1249.7 1000.6M889.2 470.0L904.0 492.8M911.4 504.2L938.0 545.2M964.8 586.5L978.7 607.8M978.7 607.9L1007.9 652.9M1009.2 654.9L1030.6 687.7M1076.5 758.5L1096.9 789.8M1101.5 796.9L1126.5 835.5M1135.8 849.8L1151.0 873.3M1160.8 888.3L1171.7 905.1M1173.1 907.2L1182.3 921.3M1206.7 958.9L1225.9 988.6M1233.4 1000.1L1253.3 1030.7M1264.4 1047.8L1283.2 1076.8M883.2 473.9L890.1 484.5M894.0 490.4L910.1 515.3M917.9 527.3L943.7 567.0M949.8 576.4L966.4 601.9M977.2 618.6L985.0 630.5M992.5 642.0L1018.0 681.3M1023.0 689.1L1028.3 697.3M1041.7 717.9L1053.2 735.6M1065.9 755.1L1081.9 779.7M1087.8 788.8L1114.3 829.7M1127.6 850.1L1134.3 860.5M1168.5 913.1L1189.5 945.4M1194.9 953.8L1200.9 963.0M1216.7 987.3L1221.1 994.1M1225.0 1000.1L1246.6 1033.4M1256.6 1048.9L1273.3 1074.5M870.7 482.0L901.4 529.2M908.6 540.3L931.8 576.1M989.4 664.8L1016.9 707.0M1024.4 718.6L1033.8 733.1M1039.5 741.9L1056.1 767.4M1059.6 772.8L1080.2 804.5M1081.6 806.7L1106.0 844.3M1108.7 848.4L1114.1 856.8M1120.6 866.7L1136.6 891.4M1144.6 903.7L1150.2 912.4M1150.9 913.5L1181.5 960.5M1191.1 975.3L1202.8 993.4M1204.6 996.1L1230.6 1036.2M1236.0 1044.4L1248.2 1063.2M1257.8 1078.0L1273.5 1102.2M862.7 487.2L872.8 502.9M884.9 521.5L891.8 532.0M914.0 566.2L933.4 596.1M937.0 601.6L957.5 633.3M970.2 652.8L998.9 697.0M1010.8 715.3L1016.8 724.5M1021.0 731.0L1037.1 755.9M1040.1 760.4L1069.0 804.9M1078.0 818.9L1095.7 846.1M1132.9 903.4L1160.0 945.0M1172.9 964.9L1191.6 993.7M1240.5 1069.1L1270.6 1115.4" stroke="#dadcdf" stroke-width="0.75" fill="none"/>
<path clip-path="url(#cR3)" d="M1145.8 315.9L1157.2 344.1M1165.8 365.4L1174.3 386.5M1177.7 394.9L1183.9 410.2M1199.9 449.7L1218.9 496.7M1223.6 508.4L1240.0 548.9M1244.1 559.2L1249.6 572.7M1251.8 578.3L1261.8 603.0M1268.0 618.3L1275.6 637.1M1283.8 657.4L1304.9 709.8M1139.6 318.5L1158.8 366.1M1166.4 384.8L1178.8 415.4M1184.3 429.1L1192.0 448.3M1199.0 465.5L1210.7 494.4M1216.0 507.7L1225.8 531.8M1226.6 533.7L1244.6 578.4M1296.5 706.8L1308.3 736.0M1133.2 321.0L1147.6 356.7M1148.4 358.8L1158.0 382.5M1161.6 391.3L1180.3 437.7M1205.5 500.0L1220.3 536.6M1227.4 554.3L1249.6 609.3M1256.1 625.4L1270.6 661.3M1292.4 715.1L1314.2 769.1M1146.2 381.5L1163.7 424.9M1167.3 433.8L1171.2 443.4M1178.5 461.5L1189.2 487.9M1189.7 489.2L1210.2 539.9M1212.8 546.3L1230.5 590.3M1236.7 605.6L1244.6 625.1M1250.9 640.7L1272.7 694.7M1277.6 706.7L1298.2 757.8M1121.5 348.0L1133.5 377.8M1155.4 432.0L1170.0 468.2M1173.7 477.3L1180.8 494.9M1182.8 499.8L1191.9 522.3M1192.8 524.7L1204.7 553.9M1213.9 576.8L1224.8 603.7M1233.9 626.2L1245.8 655.8M1249.5 665.0L1255.5 679.8M1259.9 690.7L1265.0 703.2M1269.4 714.3L1284.2 750.7M1104.7 332.5L1115.6 359.5M1147.0 437.1L1157.1 462.1M1162.1 474.6L1171.5 497.9M1175.0 506.4L1187.4 537.2M1191.5 547.3L1196.8 560.3M1201.2 571.3L1207.4 586.7M1212.3 598.9L1225.6 631.7M1230.2 643.2L1241.5 671.0M1250.7 693.7L1253.8 701.5M1259.1 714.7L1269.6 740.6M1099.1 334.8L1117.5 380.4M1125.6 400.4L1139.6 435.0M1166.1 500.8L1186.9 552.1M1195.3 573.0L1200.5 585.7M1208.0 604.5L1224.4 645.1M1248.2 703.9L1266.5 749.1M1090.0 338.5L1102.1 368.3M1105.0 375.5L1113.9 397.5M1116.4 403.8L1136.5 453.4M1140.0 462.2L1158.8 508.7M1195.4 599.4L1204.9 622.7M1212.6 641.9L1216.2 650.9M1219.8 659.6L1233.4 693.3M1242.2 715.2L1261.5 763.0M1079.1 342.9L1082.1 350.4M1089.6 368.9L1102.3 400.5M1106.4 410.7L1121.8 448.8M1129.2 467.0L1137.0 486.3M1150.4 519.6L1158.8 540.3M1161.5 547.0L1181.8 597.1M1189.4 615.9L1205.3 655.4M1205.6 656.1L1215.8 681.4M1221.8 696.1L1225.6 705.6M1233.6 725.4L1237.7 735.4M1238.5 737.4L1247.0 758.6M1073.8 345.0L1086.9 377.3M1090.0 385.0L1095.1 397.7M1100.9 412.1L1121.9 464.0M1123.9 468.9L1130.5 485.4M1157.5 552.1L1179.5 606.5M1183.7 617.0L1193.6 641.4M1196.3 648.1L1218.2 702.4M1218.7 703.7L1228.0 726.7M1233.6 740.5L1250.6 782.6M1068.7 358.6L1073.3 370.0M1077.0 379.2L1080.7 388.4M1089.4 410.0L1111.2 463.8M1115.2 473.8L1130.0 510.4M1130.8 512.4L1148.4 556.0M1155.8 574.3L1172.1 614.5M1173.3 617.5L1186.2 649.4M1186.6 650.4L1191.5 662.7M1196.8 675.8L1203.0 691.1M1211.9 713.2L1229.2 755.9M1054.2 352.9L1058.4 363.4M1090.3 442.4L1107.4 484.6M1111.4 494.5L1128.7 537.3M1130.1 540.8L1137.5 559.1M1145.1 577.8L1165.9 629.3M1188.6 685.6L1197.3 707.1M1204.8 725.7L1212.6 745.0M1049.5 354.8L1069.1 403.3M1075.8 419.9L1087.1 447.9M1106.5 495.8L1111.3 507.8M1113.7 513.6L1135.9 568.5M1145.1 591.5L1160.6 629.9M1063.8 416.1L1076.8 448.3M1081.6 460.2L1094.1 491.2M1128.3 575.9L1133.9 589.7M1140.8 606.8L1161.0 656.8M1164.2 664.6L1183.0 711.2M1185.4 717.1L1204.9 765.3M1033.5 361.3L1051.3 405.6M1067.0 444.4L1085.6 490.3M1104.7 537.6L1107.7 545.1M1110.9 553.0L1117.2 568.7M1119.8 575.1L1124.1 585.7M1132.2 605.8L1138.6 621.6M1139.6 623.9L1149.4 648.2M1154.0 659.8L1164.0 684.3M1168.7 696.1L1181.5 727.6M1189.3 747.1L1194.8 760.8M1024.5 365.0L1027.7 372.8M1054.3 438.8L1066.1 467.9M1071.5 481.4L1090.5 528.3M1096.9 544.2L1113.6 585.5M1114.9 588.8L1121.5 605.1M1126.0 616.3L1143.3 659.1M1146.4 666.6L1158.1 695.7M1166.7 716.9L1181.8 754.2M1188.9 772.0L1210.4 825.1M1012.8 369.7L1018.6 383.9M1021.0 390.1L1035.3 425.5M1043.4 445.4L1052.9 468.8M1054.5 472.8L1059.6 485.6M1064.3 497.1L1075.1 523.8M1096.8 577.6L1113.5 619.0M1122.0 640.0L1137.6 678.6M1145.9 699.2L1161.3 737.2M1161.7 738.1L1178.6 780.1M1007.4 371.8L1019.0 400.5M1026.9 420.0L1032.5 433.7M1054.2 487.6L1065.2 514.8M1067.0 519.3L1072.8 533.5M1081.0 553.9L1092.1 581.4M1131.6 679.1L1151.3 727.9M1158.1 744.7L1171.1 776.8M995.3 376.7L1001.8 392.9M1010.2 413.7L1021.8 442.4M1045.8 501.7L1053.5 520.9M1061.4 540.5L1082.4 592.3M1085.2 599.2L1105.5 649.5M1113.8 670.0L1133.1 717.9M1150.6 761.3L1172.1 814.3M990.6 378.6L1010.0 426.7M1021.7 455.6L1027.2 469.1M1032.6 482.6L1050.3 526.4M1051.0 528.0L1059.0 547.8M1084.2 610.4L1099.6 648.3M1108.1 669.5L1112.3 679.8M1119.3 697.1L1126.2 714.2M1134.5 734.8L1144.3 759.1M1145.0 760.7L1149.2 771.0M1151.4 776.6L1157.7 792.3M978.5 383.5L987.0 404.4M994.5 422.9L1010.0 461.4M1015.6 475.4L1034.8 522.8M1043.4 544.1L1050.1 560.6M1050.9 562.6L1072.8 616.9M1075.8 624.2L1089.0 657.0M1089.3 657.8L1107.5 702.8M1110.4 709.9L1130.9 760.7M1138.5 779.5L1145.6 797.0M975.0 385.0L997.1 439.7M1003.6 455.9L1024.0 506.2M1029.6 520.1L1033.1 528.8M1035.1 533.8L1038.4 541.9M1040.2 546.4L1054.5 581.9M1074.9 632.4L1096.9 686.7M1120.2 744.5L1129.8 768.1M1135.6 782.7L1152.7 824.9M963.2 389.7L982.3 437.1M983.6 440.3L990.7 458.0M997.9 475.7L1014.9 517.7M1022.4 536.5L1035.1 567.8M1035.2 567.9L1049.9 604.3M1052.3 610.4L1059.4 628.0M1063.6 638.3L1070.9 656.4M1077.1 671.8L1081.0 681.5M955.5 392.8L968.8 425.9M970.3 429.6L975.0 441.2M1006.6 519.4L1013.3 536.1M1018.9 549.8L1023.1 560.3M1028.6 573.8L1048.4 622.9M1056.5 642.9L1060.0 651.5M1068.0 671.4L1077.7 695.4M1084.3 711.7L1093.7 735.0M1095.1 738.5L1112.0 780.2M949.0 395.5L962.2 428.2M964.7 434.4L977.5 466.0M979.9 472.1L991.1 499.7M998.7 518.5L1012.2 551.9M1019.8 570.6L1029.5 594.8M1038.2 616.3L1060.6 671.8M1063.4 678.7L1075.2 707.9M1101.6 773.2L1111.5 797.7M939.0 399.5L957.5 445.4M961.8 455.9L969.1 474.2M995.3 539.0L1017.8 594.5M1022.3 605.7L1041.4 652.9M1045.3 662.8L1057.7 693.3M1060.5 700.3L1078.6 745.0M1081.8 753.1L1090.7 775.1M1091.8 777.8L1109.9 822.6M932.5 402.1L945.3 433.7M953.1 453.0L967.6 488.9M973.5 503.5L977.6 513.6M985.5 533.2L993.4 552.9M1021.9 623.2L1030.2 643.8M1042.9 675.2L1057.1 710.4M1061.7 721.8L1082.4 773.1M1084.7 778.8L1091.7 796.1M1094.2 802.4L1107.7 835.6M921.5 406.6L928.9 424.9M930.1 427.9L940.9 454.6M945.1 465.0L951.3 480.3M952.4 483.2L967.8 521.2M989.1 573.8L1002.4 606.9M1006.7 617.6L1017.1 643.2M1026.3 665.9L1044.9 712.1M1046.1 715.0L1054.4 735.5M1056.6 740.9L1067.3 767.4M914.5 409.4L933.0 455.0M936.7 464.2L957.1 514.7M982.9 578.5L1000.3 621.7M1026.4 686.4L1046.7 736.6M1050.8 746.7L1072.3 799.8M1074.2 804.5L1080.5 820.2M906.4 412.6L918.4 442.2M918.7 443.1L931.6 475.0M958.9 542.4L978.6 591.3M992.8 626.4L1002.3 649.8M1003.5 652.9L1017.0 686.3M1021.4 697.1L1035.2 731.2M1061.8 797.2L1071.1 820.1M896.0 416.9L907.6 445.6M908.2 447.2L914.1 461.8M914.3 462.1L924.7 487.9M928.9 498.4L934.6 512.4M970.2 600.5L986.6 641.3M990.3 650.2L996.1 664.8M1003.6 683.2L1012.4 704.9M1037.3 766.7L1050.7 799.9M1052.7 804.7L1069.5 846.4M890.5 419.1L896.3 433.4M898.2 438.2L909.4 465.8M911.6 471.3L919.2 490.3M921.7 496.4L928.0 512.0M928.5 513.2L931.6 520.9M937.9 536.5L950.3 567.0M958.6 587.6L967.5 609.8M971.3 619.1L980.6 642.0M981.1 643.3L986.8 657.6M988.8 662.4L993.8 674.8M999.6 689.1L1012.5 721.1M1019.0 737.1L1036.4 780.3M1043.7 798.4L1050.9 816.0M1051.3 817.0L1061.4 842.2M907.2 483.7L926.7 531.8M929.0 537.6L949.3 587.7M951.5 593.2L972.7 645.8M1006.8 730.2L1023.6 771.7M1025.7 776.9L1029.1 785.3M1037.7 806.7L1057.9 856.7M870.1 427.3L878.5 447.9M880.1 452.1L902.5 507.5M931.4 579.0L951.9 629.7M955.3 638.1L968.3 670.3M977.0 691.9L997.0 741.4M998.9 745.9L1019.7 797.6M1025.1 810.8L1043.8 857.1M879.6 470.8L899.8 520.7M930.3 596.4L938.0 615.4M942.4 626.2L961.0 672.3M967.7 688.8L972.8 701.5M974.1 704.7L992.2 749.5M995.4 757.5L1009.9 793.1M1015.6 807.4L1023.9 827.9M1027.1 835.9L1046.0 882.5M855.5 433.2L863.0 451.7M865.6 458.2L885.4 507.2M894.0 528.5L902.1 548.4M920.3 593.4L934.8 629.3M936.1 632.6L941.9 647.0M944.5 653.5L957.3 685.1M958.9 689.1L979.4 739.7M985.3 754.3L994.5 777.2M1006.8 807.5L1022.1 845.5M846.0 437.1L852.6 453.4M856.6 463.2L872.7 503.1M875.4 509.8L896.2 561.3M900.6 572.1L917.0 612.6M953.5 703.1L961.4 722.6M987.8 788.0L1009.9 842.7M837.5 440.5L841.8 451.1M853.6 480.5L865.3 509.4M873.3 529.1L883.6 554.5M907.5 613.8L928.6 666.1M929.6 668.4L948.8 716.0M950.2 719.6L957.2 736.9M958.0 738.9L974.9 780.6M984.2 803.5L1000.9 844.8M832.9 442.4L855.0 497.0M862.4 515.4L869.0 531.8M875.2 547.1L886.7 575.5M905.6 622.3L908.6 629.9M912.0 638.2L925.7 672.2M927.3 676.0L949.2 730.2M955.2 745.2L970.0 781.9M994.7 842.8L1004.4 866.8M820.7 447.3L826.9 462.8M840.5 496.4L844.0 505.0M859.7 544.0L871.9 574.1M877.1 587.0L896.8 635.9M905.9 658.3L912.4 674.3M920.9 695.5L941.1 745.5M942.5 748.9L947.8 762.0M949.0 765.1L959.1 789.9M963.0 799.6L984.2 852.2M814.5 449.8L825.0 475.7M827.5 481.8L835.4 501.5M842.2 518.3L858.6 558.8M871.6 591.2L886.1 626.9M889.9 636.3L902.5 667.5M925.0 723.3L933.6 744.6M937.9 755.1L959.4 808.5M960.7 811.6L964.0 819.6M968.3 830.3L971.5 838.4M973.0 842.0L985.2 872.2M806.6 453.0L816.4 477.2M817.3 479.6L824.6 497.6M829.6 509.9L832.9 518.0M904.7 695.8L908.7 705.6M917.2 726.6L930.7 760.2M938.2 778.7L950.8 810.0M951.0 810.3L972.6 863.8M825.2 520.0L833.5 540.6M837.8 551.3L852.3 587.2M876.2 646.3L879.6 654.7M881.1 658.6L903.1 712.9M911.0 732.5L932.4 785.4M790.0 459.7L806.3 500.1M807.8 503.8L816.6 525.7M825.9 548.7L836.5 574.8M845.5 597.1L863.0 640.5M882.1 687.8L887.1 700.1M893.0 714.8L898.5 728.3M907.2 749.9L922.3 787.1M924.7 793.2L934.1 816.4M934.4 817.2L947.0 848.5M950.7 857.6L956.5 871.8M779.8 463.8L788.9 486.4M790.8 491.2L800.9 516.1M804.4 524.9L812.1 543.9M822.7 570.1L843.5 621.6M846.5 629.0L858.4 658.5M860.4 663.4L880.6 713.5M887.3 730.0L906.7 777.9M933.1 843.3L951.6 889.1M773.4 466.4L777.6 476.9M782.4 488.8L794.3 518.2M802.3 538.0L810.5 558.2M812.5 563.2L825.4 595.1M833.9 616.1L845.9 646.0M850.1 656.3L856.7 672.7M860.3 681.6L867.1 698.4M870.1 705.8L891.4 758.6M895.9 769.7L899.6 778.8M904.5 790.8L909.7 803.8M914.2 814.8L924.0 839.2M930.9 856.2L935.1 866.7M935.6 867.8L950.3 904.4M764.8 469.9L781.8 511.9M785.5 521.1L792.9 539.5M808.9 579.1L831.2 634.2M840.0 656.0L852.1 685.9M854.6 692.1L865.7 719.7M868.7 727.2L883.5 763.8M890.2 780.3L896.2 795.0M911.9 834.0L927.2 871.8M754.3 474.1L764.0 498.1M770.1 513.2L790.8 564.4M798.1 582.4L811.7 616.1M820.0 636.7L836.5 677.4M855.3 724.1L862.6 742.1M871.0 762.9L877.7 779.6M883.1 792.9L905.5 848.3M911.3 862.6L920.3 884.9M747.2 477.0L756.3 499.6M762.6 515.2L781.6 562.2M788.0 577.9L807.1 625.3M807.4 626.0L810.9 634.8M819.9 656.9L839.2 704.9M848.5 727.8L869.0 778.6M891.3 833.7L909.2 878.1" stroke="#dadcdf" stroke-width="0.75" fill="none"/>
<path clip-path="url(#cR3)" d="M744.2 479.9L755.3 475.4M767.8 470.3L784.3 463.7M796.6 458.7L818.6 449.8M909.0 413.3L962.9 391.5M969.5 388.8L980.3 384.5M1002.8 375.4L1012.0 371.7M1015.2 370.4L1039.4 360.6M1061.1 351.8L1084.3 342.5M1103.0 334.9L1136.7 321.3M750.0 494.2L787.3 479.1M790.3 477.9L840.9 457.4M853.9 452.2L883.5 440.3M891.8 436.9L909.7 429.7M941.6 416.8L982.7 400.2M1059.1 369.3L1078.0 361.7M1084.9 358.9L1103.1 351.5M1109.1 349.1L1154.6 330.7M753.7 503.4L783.7 491.3M862.1 459.6L892.6 447.3M902.9 443.1L925.9 433.8M937.1 429.3L965.7 417.7M968.4 416.6L1018.5 396.4M1039.7 387.8L1075.4 373.4M1086.7 368.8L1108.5 360.1M1120.9 355.0L1155.7 341.0M1157.3 340.3L1194.2 325.4M759.8 518.4L810.1 498.1M824.4 492.3L868.0 474.7M878.5 470.4L903.9 460.2M916.8 455.0L952.4 440.6M966.4 434.9L990.7 425.1M1005.9 419.0L1034.5 407.4M1043.3 403.9L1080.9 388.7M1101.3 380.4L1140.0 364.8M1152.3 359.8L1191.7 343.9M809.9 506.7L849.0 490.9M912.8 465.1L943.9 452.5M954.4 448.3L988.0 434.7M1011.0 425.4L1021.5 421.2M1035.3 415.6L1053.7 408.2M1076.8 398.8L1098.4 390.1M1129.5 377.5L1172.4 360.2M821.4 519.7L855.4 506.0M878.2 496.8L906.6 485.3M906.8 485.2L925.8 477.6M1003.9 446.0L1045.7 429.1M1067.4 420.3L1092.2 410.3M1098.3 407.9L1110.6 402.9M1117.6 400.1L1164.7 381.0M1164.8 381.0L1196.7 368.1M818.5 527.9L840.9 518.8M843.1 517.9L860.4 511.0M863.4 509.7L917.7 487.8M926.3 484.3L970.1 466.6M971.8 465.9L1021.1 446.0M1062.2 429.4L1088.9 418.6M1105.4 412.0L1122.6 405.0M1129.9 402.1L1149.4 394.2M1167.8 386.7L1193.8 376.2M777.8 563.1L814.9 548.1M866.8 527.2L874.9 523.9M893.8 516.2L905.0 511.7M918.8 506.2L966.8 486.8M986.3 478.9L1000.7 473.1M1012.6 468.3L1021.9 464.5M1038.2 457.9L1063.8 447.6M1107.8 429.8L1158.8 409.2M1175.6 402.4L1214.2 386.8M891.4 527.0L913.5 518.0M915.2 517.3L946.8 504.6M964.5 497.4L1016.0 476.6M1034.1 469.3L1044.2 465.2M1055.3 460.7L1104.7 440.8M1125.7 432.3L1170.4 414.2M1187.3 407.4L1216.0 395.8M785.8 582.8L840.8 560.5M844.2 559.1L878.1 545.4M885.6 542.4L921.0 528.1M941.2 520.0L991.9 499.5M1014.8 490.2L1048.8 476.5M1079.5 464.1L1127.4 444.7M1149.4 435.8L1180.9 423.1M1182.3 422.5L1217.8 408.2M790.5 594.4L800.2 590.5M822.7 581.4L863.6 564.9M878.3 559.0L907.9 547.0M917.7 543.0L944.3 532.3M945.7 531.7L1000.0 509.8M1012.5 504.7L1044.7 491.7M1048.1 490.4L1088.8 473.9M1091.2 472.9L1104.6 467.6M1171.7 440.4L1188.4 433.7M795.7 607.5L845.3 587.4M848.9 586.0L877.0 574.6M880.9 573.1L933.5 551.8M934.0 551.6L967.5 538.0M988.0 529.8L1007.4 521.9M1027.2 514.0L1067.8 497.5M1074.6 494.8L1090.1 488.5M1164.9 458.3L1174.9 454.3M1190.1 448.1L1226.3 433.5M800.4 618.9L835.3 604.9M854.0 597.3L909.5 574.9M926.2 568.1L944.1 560.9M964.5 552.6L1019.6 530.4M1086.2 503.5L1128.1 486.5M1130.4 485.6L1142.7 480.7M1147.7 478.6L1192.2 460.7M1208.3 454.2L1260.9 432.9M840.4 611.4L883.7 593.9M891.2 590.9L913.8 581.8M960.9 562.8L1005.8 544.6M1007.9 543.8L1051.5 526.2M1070.2 518.6L1122.6 497.4M1132.5 493.4L1162.7 481.2M1169.7 478.4L1214.9 460.1M828.6 630.3L867.2 614.7M887.0 606.7L942.3 584.4M943.2 584.0L960.2 577.2M977.7 570.1L1017.2 554.1M1032.4 548.0L1069.4 533.0M1077.0 529.9L1115.6 514.4M1130.2 508.5L1171.9 491.6M813.9 652.3L857.0 634.9M925.3 607.3L953.7 595.8M1005.0 575.1L1042.3 560.1M1070.2 548.8L1110.1 532.7M1120.9 528.3L1173.3 507.1M1193.5 499.0L1203.4 495.0M1219.1 488.6L1245.6 477.9M816.1 657.8L854.8 642.1M866.8 637.2L910.4 619.6M922.1 614.9L942.4 606.7M955.4 601.5L993.3 586.1M1010.6 579.1L1055.0 561.2M1168.7 515.3L1204.6 500.8M1210.2 498.5L1259.2 478.7M821.7 671.6L829.9 668.3M832.5 667.2L878.3 648.7M896.5 641.4L911.8 635.2M994.2 601.9L1037.1 584.6M1082.3 566.3L1103.8 557.6M1114.6 553.3L1148.7 539.5M1162.0 534.1L1210.5 514.5M1222.7 509.6L1254.3 496.8M826.6 683.9L870.4 666.2M874.1 664.7L928.2 642.8M942.8 636.9L979.6 622.1M985.4 619.7L1024.5 603.9M1027.1 602.9L1067.2 586.7M1089.6 577.6L1133.2 560.0M1136.5 558.7L1144.7 555.4M1145.2 555.2L1196.3 534.5M1196.6 534.4L1206.3 530.5M1215.7 526.7L1232.4 519.9M830.9 694.4L845.2 688.6M860.4 682.5L877.3 675.7M944.7 648.4L978.6 634.7M981.3 633.7L1021.7 617.3M1035.2 611.9L1082.1 592.9M1083.6 592.3L1117.3 578.7M1138.5 570.1L1157.5 562.5M1193.6 547.9L1222.9 536.0M1226.1 534.7L1234.3 531.4M835.2 705.1L888.2 683.7M942.7 661.6L960.1 654.6M965.4 652.5L1001.7 637.8M1022.3 629.5L1042.6 621.3M1059.4 614.5L1072.0 609.4M1072.2 609.3L1107.5 595.1M1118.3 590.7L1134.8 584.1M1178.1 566.6L1208.0 554.5M1225.3 547.5L1256.3 534.9M868.3 701.7L890.2 692.9M897.2 690.0L922.5 679.9M940.6 672.5L991.1 652.1M1005.4 646.3L1033.5 635.0M1052.8 627.2L1067.0 621.5M1072.2 619.4L1082.4 615.3M1086.5 613.6L1126.9 597.3M1137.7 592.9L1165.3 581.7M1179.0 576.2L1206.3 565.2M890.4 707.9L908.8 700.5M924.2 694.2L948.7 684.3M1030.1 651.5L1043.7 646.0M1053.1 642.2L1101.9 622.5M1122.5 614.1L1152.3 602.1M1200.2 582.7L1246.3 564.1M849.4 740.3L889.1 724.3M891.6 723.2L941.0 703.3M952.0 698.8L990.5 683.3M995.0 681.5L1035.2 665.2M1058.2 655.9L1097.7 640.0M1109.3 635.3L1124.5 629.1M1131.6 626.3L1145.4 620.7M1221.0 590.2L1237.6 583.4M1250.6 578.2L1284.6 564.4M852.3 747.4L891.9 731.4M912.1 723.2L951.3 707.4M973.5 698.5L1008.6 684.3M1073.4 658.1L1102.7 646.2M1174.3 617.3L1215.7 600.6M1225.0 596.8L1246.9 588.0M858.8 763.4L875.7 756.6M912.0 741.9L927.0 735.9M939.5 730.8L978.1 715.2M980.8 714.1L1029.1 694.6M1029.5 694.5L1040.4 690.1M1059.7 682.2L1078.8 674.5M1099.7 666.1L1130.7 653.6M1147.6 646.7L1158.2 642.5M1159.3 642.0L1212.3 620.6M1233.1 612.2L1242.8 608.3M1257.6 602.3L1308.0 581.9M862.7 773.3L907.7 755.1M927.0 747.3L969.2 730.3M969.5 730.1L998.4 718.5M1021.2 709.3L1050.4 697.4M1066.8 690.8L1104.0 675.8M1140.3 661.1L1178.0 645.9M1195.6 638.8L1210.0 633.0M1215.9 630.6L1259.7 612.9M1269.4 609.0L1293.0 599.4M904.2 766.7L912.0 763.5M928.9 756.6L981.6 735.4M1037.7 712.7L1077.3 696.7M1087.5 692.6L1127.7 676.3M1135.4 673.2L1174.3 657.5M1187.5 652.2L1202.7 646.0M1212.7 642.0L1245.4 628.8M1254.6 625.1L1298.2 607.5M940.6 766.3L959.2 758.8M964.3 756.7L983.0 749.1M986.7 747.7L1018.3 734.9M1037.1 727.3L1046.5 723.5M1084.6 708.1L1098.5 702.5M1172.2 672.7L1220.5 653.2M1240.1 645.3L1250.3 641.2M1255.7 639.0L1268.7 633.7M874.8 803.1L906.7 790.2M926.4 782.2L968.9 765.0M981.5 760.0L1031.9 739.6M1050.3 732.2L1104.1 710.4M1117.4 705.0L1135.1 697.9M1135.8 697.6L1177.6 680.7M1181.8 679.0L1216.9 664.8M1224.1 661.9L1273.3 642.0M935.8 794.9L966.2 782.6M981.2 776.6L1003.2 767.7M1010.1 764.9L1042.2 751.9M1044.9 750.9L1054.9 746.8M1076.9 737.9L1119.6 720.6M1128.3 717.1L1171.9 699.5M1192.1 691.4L1219.7 680.2M1232.4 675.1L1249.6 668.2M1268.6 660.5L1314.5 641.9M884.9 828.2L906.7 819.4M913.0 816.8L959.5 798.1M1036.2 767.1L1075.1 751.3M1092.2 744.5L1147.4 722.1M1158.5 717.6L1185.4 706.8M1197.5 701.9L1222.7 691.7M1232.3 687.9L1247.3 681.8M1251.9 679.9L1282.2 667.7M888.8 837.8L936.3 818.6M953.8 811.5L986.1 798.5M1011.9 788.0L1028.6 781.3M1035.2 778.6L1076.3 762.1M1091.3 756.0L1115.2 746.3M1115.4 746.2L1141.1 735.9M1147.8 733.1L1179.0 720.5M1182.5 719.1L1195.0 714.1M1225.1 701.9L1235.4 697.8M1245.0 693.9L1255.2 689.8M1262.0 687.0L1302.7 670.6M894.5 852.0L932.5 836.6M942.9 832.4L988.2 814.1M1009.7 805.4L1058.2 785.9M1066.8 782.4L1075.5 778.9M1117.5 761.9L1140.2 752.7M1198.8 729.1L1231.0 716.0M1244.7 710.5L1277.4 697.3M1288.8 692.7L1319.0 680.5M897.0 858.1L915.2 850.8M937.7 841.7L946.0 838.3M1034.9 802.4L1078.3 784.9M1100.4 776.0L1138.1 760.7M1154.0 754.3L1195.9 737.3M903.1 873.3L944.2 856.7M947.6 855.3L970.3 846.2M985.4 840.1L1024.6 824.2M1027.4 823.1L1048.2 814.7M1060.9 809.5L1114.0 788.1M1181.7 760.7L1223.6 743.8M1226.7 742.6L1244.7 735.3M1255.1 731.1L1304.0 711.3M971.0 860.7L1024.1 839.2M1041.1 832.4L1078.8 817.1M1096.6 809.9L1127.0 797.7M1129.0 796.8L1174.8 778.3M1181.9 775.5L1210.1 764.1M1226.5 757.4L1238.1 752.7M1253.6 746.5L1270.9 739.5M1281.6 735.2L1332.0 714.8" stroke="#dadcdf" stroke-width="0.75" fill="none"/>
<path d="M1240,386 Q1250,372 1268,374 Q1280,362 1300,366 Q1315,358 1328,368 L1330,420 L1240,420 Z" fill="#f6f6f6"/>
<path d="M1217,359 L1559,359 L1559,418 L1527,409 L1500,398 L1476,391 L1454,384 L1427,376 L1400,371 L1360,369 L1336,370 L1328,369 L1315,367 L1300,364 L1284,361 L1278,366 L1266,369 L1264,378 L1240,378 L1236,381 L1221,385 L1217,387 Z" fill="#8fd6ec"/>
<rect x="970" y="359" width="7" height="62" fill="#8fd6ec"/>
<polygon points="1000,478 1006,490 1022,526 1029,543 1038,561 1047,580 1061,603 1074,629 1085,649 1099,672 1113,691 1125,710 1131,719 1181,719 1168,703 1153,680 1141,666 1128,651 1116,626 1107,611 1096,592 1088,580 1078,554 1065,533 1053,514 1048,500 1043,488" fill="#8fd6ec"/>
<path d="M1156,508 L1290,508" stroke="#8fd6ec" stroke-width="1.9" fill="none"/>
<path d="M1152,489 L1160,508 L1176,533" stroke="#8fd6ec" stroke-width="1.9" fill="none"/>
<path d="M1200,580 L1270,549 L1278,562" stroke="#8fd6ec" stroke-width="1.9" fill="none"/>
<path d="M1534,415 L1512,485 L1469,485" stroke="#8fd6ec" stroke-width="1.9" fill="none"/>
<path d="M1381,371 L1381,427" stroke="#8fd6ec" stroke-width="1.9" fill="none"/>
<path d="M1050,540 L1100,520 L1160,515" stroke="#8fd6ec" stroke-width="1.9" fill="none"/>
<path d="M1080,600 L1150,575 L1230,548" stroke="#8fd6ec" stroke-width="1.9" fill="none"/>
<path d="M1111,618 L1190,585 L1260,565" stroke="#8fd6ec" stroke-width="1.9" fill="none"/>
<path d="M1050,500 L1080,492 L1120,515 L1150,540" stroke="#8fd6ec" stroke-width="1.9" fill="none"/>
<path d="M1220,488 L1240,520 L1230,548" stroke="#8fd6ec" stroke-width="1.9" fill="none"/>
<path d="M1000,697 L1030,680 L1088,655" stroke="#8fd6ec" stroke-width="1.9" fill="none"/>
<path d="M1170,488 L1190,510" stroke="#8fd6ec" stroke-width="1.9" fill="none"/>
<path d="M1219,385 L1231,458" stroke="#8fd6ec" stroke-width="1.9" fill="none"/>
<path d="M1262,633 L1310,600 L1420,534 L1445,500" stroke="#fbf2d6" stroke-width="8" fill="none" stroke-linecap="round"/>
<path d="M970,480 L994,520 L1019,600 L1035,660 L1058,719" stroke="#d5d9de" stroke-width="5" fill="none"/>
<path d="M972,684 L1000,666 L1030,652" stroke="#dcdfe3" stroke-width="2.5" fill="none"/>
<path d="M1045,719 L1130,666 L1190,628 L1276,571 L1290,545 L1318,460 L1324,455" stroke="#d5d9de" stroke-width="9" fill="none"/>
<path d="M1045,719 L1130,666 L1190,628 L1276,571 L1290,545 L1318,460 L1324,455" stroke="#e4e7ea" stroke-width="5" fill="none"/>
<path d="M1282,565 L1300,548 L1328,460" stroke="#8fd6ec" stroke-width="1.6" fill="none"/>
<path d="M1440,490 L1470,520 L1520,570 L1559,620" stroke="#d5d9de" stroke-width="4" fill="none"/>
<path d="M1140,535 L1262,719" stroke="#d9dce0" stroke-width="2.5" fill="none"/>
<path d="M1217,456 L1324,455" stroke="#dfe2e6" stroke-width="3" fill="none"/>
<path d="M1478,650 L1525,690 L1545,719" stroke="#d9dce0" stroke-width="2.5" fill="none"/><path d="M1420,700 L1480,655" stroke="#dcdfe3" stroke-width="1.5" fill="none"/>
<path d="M1332,359 L1332,380 L1325,455 L1559,458" stroke="#7f9bc0" stroke-width="6" fill="none" stroke-linejoin="round"/>
<text x="1278" y="460" font-size="8.5" fill="#5f6368" text-anchor="start" font-weight="normal" stroke="#fff" stroke-width="2.2" paint-order="stroke" stroke-linejoin="round">Jl. Tritura</text>
<text x="1218" y="461" font-size="8.5" fill="#5f6368" text-anchor="start" font-weight="normal" stroke="#fff" stroke-width="2.2" paint-order="stroke" stroke-linejoin="round">ra</text>
<text x="1329" y="362" font-size="9" fill="#3c4043" text-anchor="start" font-weight="bold" transform="rotate(90 1329 362)" stroke="#fff" stroke-width="2.2" paint-order="stroke" stroke-linejoin="round">Hamid II</text>
<text x="1493" y="461" font-size="10.5" fill="#3c4043" text-anchor="start" font-weight="bold" stroke="#fff" stroke-width="2.2" paint-order="stroke" stroke-linejoin="round">Jl. Ya M Sabr</text>
<text x="982" y="521" font-size="10.5" fill="#3c4043" text-anchor="start" font-weight="normal" transform="rotate(65 982 521)" stroke="#fff" stroke-width="2.2" paint-order="stroke" stroke-linejoin="round">Jl. Tanjung Pura</text>
<text x="974" y="609" font-size="9" fill="#5f6368" text-anchor="start" font-weight="normal" transform="rotate(-28 974 609)" stroke="#fff" stroke-width="2.2" paint-order="stroke" stroke-linejoin="round">Ketapang</text>
<text x="995" y="663" font-size="8.5" fill="#5f6368" text-anchor="start" font-weight="normal" transform="rotate(-30 995 663)" stroke="#fff" stroke-width="2.2" paint-order="stroke" stroke-linejoin="round">Jl. Hijas</text>
<text x="1100" y="692" font-size="10.5" fill="#3c4043" text-anchor="start" font-weight="normal" transform="rotate(-33 1100 692)" stroke="#fff" stroke-width="2.2" paint-order="stroke" stroke-linejoin="round">Jl. Sultan Hamid</text>
<text x="1168" y="580" font-size="8.5" fill="#5f6368" text-anchor="start" font-weight="normal" transform="rotate(62 1168 580)" stroke="#fff" stroke-width="2.2" paint-order="stroke" stroke-linejoin="round">Jl. Tj. Raya 1</text>
<text x="1440" y="685" font-size="8.5" fill="#5f6368" text-anchor="start" font-weight="normal" transform="rotate(-38 1440 685)" stroke="#fff" stroke-width="2.2" paint-order="stroke" stroke-linejoin="round">Jl. Tani</text>
<path d="M1086,509 L1090,514 L1094,509" fill="#fff"/>
<circle cx="1090" cy="503" r="9.3" fill="#fff"/>
<circle cx="1090" cy="503" r="8" fill="#a970e0"/>
<rect x="1086" y="498" width="8" height="9" rx="1" fill="#fff"/>
<text x="1076" y="504" font-size="11" fill="#9466d6" text-anchor="end" font-weight="normal" stroke="#fff" stroke-width="2.2" paint-order="stroke" stroke-linejoin="round">Keraton Kadriyah</text>
<text x="1076" y="515" font-size="11" fill="#9466d6" text-anchor="end" font-weight="normal" stroke="#fff" stroke-width="2.2" paint-order="stroke" stroke-linejoin="round">Kesultanan Pontianak</text>
<path d="M1142,545 L1146,550 L1150,545" fill="#fff"/>
<circle cx="1146" cy="539" r="9.3" fill="#fff"/>
<circle cx="1146" cy="539" r="8" fill="#ef7c22"/>
<rect x="1142" y="535" width="8" height="6" rx="1" fill="#fff"/>
<text x="1134" y="546" font-size="11" fill="#d9731f" text-anchor="end" font-weight="normal" stroke="#fff" stroke-width="2.2" paint-order="stroke" stroke-linejoin="round">Ambawang</text>
<path d="M1032,554 L1036,559 L1040,554" fill="#fff"/>
<circle cx="1036" cy="548" r="9.3" fill="#fff"/>
<circle cx="1036" cy="548" r="8" fill="#1e8e3e"/>
<path d="M1036,542 L1032,550 L1040,550 Z" fill="#fff"/>
<path d="M969,642 L973,647 L977,642" fill="#fff"/>
<circle cx="973" cy="636" r="9.3" fill="#fff"/>
<circle cx="973" cy="636" r="8" fill="#e84fbf"/>
<path d="M965,687 L969,692 L973,687" fill="#fff"/>
<circle cx="969" cy="681" r="9.3" fill="#fff"/>
<circle cx="969" cy="681" r="8" fill="#e84fbf"/>
<path d="M1359,450 L1363,455 L1367,450" fill="#fff"/>
<circle cx="1363" cy="444" r="9.3" fill="#fff"/>
<circle cx="1363" cy="444" r="8" fill="#ef7c22"/>
<rect x="1359" y="440" width="8" height="6" rx="1" fill="#fff"/>
<text x="1375" y="446" font-size="11" fill="#d9731f" text-anchor="start" font-weight="normal" stroke="#fff" stroke-width="2.2" paint-order="stroke" stroke-linejoin="round">Toko Kami -</text>
<text x="1375" y="458" font-size="11" fill="#d9731f" text-anchor="start" font-weight="normal" stroke="#fff" stroke-width="2.2" paint-order="stroke" stroke-linejoin="round">Ya M Sabran</text>
<path d="M1436,493 L1440,498 L1444,493" fill="#fff"/>
<circle cx="1440" cy="487" r="9.3" fill="#fff"/>
<circle cx="1440" cy="487" r="8" fill="#ef7c22"/>
<path d="M1437,483 L1437,492 M1443,483 L1443,492" stroke="#fff" stroke-width="1.6"/>
<text x="1427" y="496" font-size="11" fill="#d9731f" text-anchor="end" font-weight="normal" stroke="#fff" stroke-width="2.2" paint-order="stroke" stroke-linejoin="round">Bahari Seafood</text>
<path d="M1403,528 L1407,533 L1411,528" fill="#fff"/>
<circle cx="1407" cy="522" r="9.3" fill="#fff"/>
<circle cx="1407" cy="522" r="8" fill="#1a8ae6"/>
<rect x="1403" y="519" width="8" height="6" rx="1" fill="#fff"/>
<text x="1419" y="531" font-size="11" fill="#1a73e8" text-anchor="start" font-weight="normal" stroke="#fff" stroke-width="2.2" paint-order="stroke" stroke-linejoin="round">SKD Jilbab</text>
<path d="M1533,520 L1537,525 L1541,520" fill="#fff"/>
<circle cx="1537" cy="514" r="9.3" fill="#fff"/>
<circle cx="1537" cy="514" r="8" fill="#1e8e3e"/>
<circle cx="1537" cy="514" r="3" fill="#fff"/>
<path d="M1348,569 L1352,574 L1356,569" fill="#fff"/>
<circle cx="1352" cy="563" r="9.3" fill="#fff"/>
<circle cx="1352" cy="563" r="8" fill="#ef7c22"/>
<path d="M1349,559 L1349,568 M1355,559 L1355,568" stroke="#fff" stroke-width="1.6"/>
<text x="1279" y="569" font-size="11" fill="#d9731f" text-anchor="start" font-weight="normal" stroke="#fff" stroke-width="2.2" paint-order="stroke" stroke-linejoin="round">Ayam Venus</text>
<path d="M1490,595 L1494,600 L1498,595" fill="#fff"/>
<circle cx="1494" cy="589" r="9.3" fill="#fff"/>
<circle cx="1494" cy="589" r="8" fill="#7a8a99"/>
<path d="M1489,588 L1494,585 L1499,588 L1494,591 Z" fill="#fff"/>
<text x="1482" y="590" font-size="11" fill="#70757a" text-anchor="end" font-weight="normal" stroke="#fff" stroke-width="2.2" paint-order="stroke" stroke-linejoin="round">Balai Penjaminan Mutu</text>
<text x="1482" y="601" font-size="11" fill="#70757a" text-anchor="end" font-weight="normal" stroke="#fff" stroke-width="2.2" paint-order="stroke" stroke-linejoin="round">Pendidikan Provinsi...</text>
<path d="M1223,651 L1227,656 L1231,651" fill="#fff"/>
<circle cx="1227" cy="645" r="9.3" fill="#fff"/>
<circle cx="1227" cy="645" r="8" fill="#e8453c"/>
<text x="1227" y="649" font-size="9" fill="#fff" text-anchor="middle" font-weight="bold">H</text>
<text x="1240" y="645.5" font-size="11" fill="#d93025" text-anchor="start" font-weight="normal" stroke="#fff" stroke-width="2.2" paint-order="stroke" stroke-linejoin="round">RSU YARSI</text>
<text x="1240" y="656.5" font-size="11" fill="#d93025" text-anchor="start" font-weight="normal" stroke="#fff" stroke-width="2.2" paint-order="stroke" stroke-linejoin="round">PONTIANAK</text>
<path d="M1474,649 L1478,654 L1482,649" fill="#fff"/>
<circle cx="1478" cy="643" r="9.3" fill="#fff"/>
<circle cx="1478" cy="643" r="8" fill="#ef7c22"/>
<path d="M1475,639 L1475,648 M1481,639 L1481,648" stroke="#fff" stroke-width="1.6"/>
<text x="1466" y="644" font-size="11" fill="#d9731f" text-anchor="end" font-weight="normal" stroke="#fff" stroke-width="2.2" paint-order="stroke" stroke-linejoin="round">Warung Mie</text>
<text x="1466" y="656" font-size="11" fill="#d9731f" text-anchor="end" font-weight="normal" stroke="#fff" stroke-width="2.2" paint-order="stroke" stroke-linejoin="round">Lemak Timbol</text>
<path d="M1283,702 L1287,707 L1291,702" fill="#fff"/>
<circle cx="1287" cy="696" r="9.3" fill="#fff"/>
<circle cx="1287" cy="696" r="8" fill="#1a8ae6"/>
<rect x="1283" y="693" width="8" height="6" rx="1" fill="#fff"/>
<text x="1273" y="698" font-size="11" fill="#1a73e8" text-anchor="end" font-weight="normal" stroke="#fff" stroke-width="2.2" paint-order="stroke" stroke-linejoin="round">AzuraYa Vapor Store</text>
<text x="1275" y="708" font-size="11" fill="#1a73e8" text-anchor="end" font-weight="normal" stroke="#fff" stroke-width="2.2" paint-order="stroke" stroke-linejoin="round">Pontianak Tanjung Raya</text>
<path d="M1525,706 L1529,711 L1533,706" fill="#fff"/>
<circle cx="1529" cy="700" r="9.3" fill="#fff"/>
<circle cx="1529" cy="700" r="8" fill="#6f7f8e"/>
<text x="1517" y="706" font-size="11" fill="#70757a" text-anchor="end" font-weight="normal" stroke="#fff" stroke-width="2.2" paint-order="stroke" stroke-linejoin="round">Dapok Mak Eca</text>
<path d="M997,725 L1001,730 L1005,725" fill="#fff"/>
<circle cx="1001" cy="719" r="9.3" fill="#fff"/>
<circle cx="1001" cy="719" r="8" fill="#1a8ae6"/>
<text x="978" y="719" font-size="11" fill="#1a73e8" text-anchor="start" font-weight="normal" stroke="#fff" stroke-width="2.2" paint-order="stroke" stroke-linejoin="round">ket</text>
<path d="M1264.5,540 C1262,532 1254.5,527 1254.5,520.5 A10,10 0 1 1 1274.5,520.5 C1274.5,527 1267,532 1264.5,540 Z" fill="#ea4335" stroke="#b31412" stroke-width=".6"/>
<circle cx="1264.5" cy="520.5" r="3.8" fill="#a50e0e"/>
<text x="1277" y="526" font-size="11" fill="#d93025" text-anchor="start" font-weight="normal" stroke="#fff" stroke-width="2.2" paint-order="stroke" stroke-linejoin="round">Pesantren Darul</text>
<text x="1277" y="537" font-size="11" fill="#d93025" text-anchor="start" font-weight="normal" stroke="#fff" stroke-width="2.2" paint-order="stroke" stroke-linejoin="round">Qur'an And</text>
<text x="1246" y="702" font-size="11" font-weight="bold" stroke="#fff" stroke-width="2" paint-order="stroke" letter-spacing="-0.3"><tspan fill="#4285f4">G</tspan><tspan fill="#ea4335">o</tspan><tspan fill="#fbbc05">o</tspan><tspan fill="#4285f4">g</tspan><tspan fill="#34a853">l</tspan><tspan fill="#ea4335">e</tspan></text>
<text x="971" y="396" font-size="9" fill="#2b6f8c" text-anchor="start" font-weight="normal">L</text>
<text x="969" y="480" font-size="10" fill="#202124" text-anchor="start" font-weight="normal">ia</text>
<rect x="978" y="678" width="32" height="32" rx="2" fill="#fff"/>
<rect x="980" y="680" width="28" height="28" fill="#7a6b57"/>
<rect x="986.4" y="694.7" width="1.6" height="1.6" fill="#9a8a72"/><rect x="1004.7" y="692.8" width="1.6" height="1.6" fill="#75806a"/><rect x="981.8" y="680.4" width="1.6" height="1.6" fill="#4f5e3e"/><rect x="992.7" y="694.9" width="1.6" height="1.6" fill="#6a5c4a"/><rect x="1006.9" y="692.7" width="1.6" height="1.6" fill="#4f5e3e"/><rect x="994.8" y="690.7" width="1.6" height="1.6" fill="#4f5e3e"/><rect x="984.1" y="697.1" width="1.6" height="1.6" fill="#4f5e3e"/><rect x="1005.0" y="690.5" width="1.6" height="1.6" fill="#8c7c66"/><rect x="998.1" y="681.7" width="1.6" height="1.6" fill="#4f5e3e"/><rect x="1005.9" y="681.2" width="1.6" height="1.6" fill="#4f5e3e"/><rect x="980.8" y="703.4" width="1.6" height="1.6" fill="#5f6e4a"/><rect x="996.1" y="704.8" width="1.6" height="1.6" fill="#5f6e4a"/><rect x="999.3" y="704.9" width="1.6" height="1.6" fill="#5f6e4a"/><rect x="999.7" y="695.6" width="1.6" height="1.6" fill="#6a5c4a"/><rect x="1003.7" y="682.6" width="1.6" height="1.6" fill="#6a5c4a"/><rect x="993.4" y="687.0" width="1.6" height="1.6" fill="#857560"/><rect x="991.8" y="696.9" width="1.6" height="1.6" fill="#9a8a72"/><rect x="991.4" y="702.5" width="1.6" height="1.6" fill="#75806a"/><rect x="989.5" y="695.8" width="1.6" height="1.6" fill="#75806a"/><rect x="986.3" y="689.1" width="1.6" height="1.6" fill="#8c7c66"/><rect x="1003.1" y="706.8" width="1.6" height="1.6" fill="#857560"/><rect x="998.8" y="698.9" width="1.6" height="1.6" fill="#9a8a72"/><rect x="1006.0" y="704.4" width="1.6" height="1.6" fill="#75806a"/><rect x="982.8" y="697.7" width="1.6" height="1.6" fill="#857560"/><rect x="1002.5" y="695.5" width="1.6" height="1.6" fill="#9a8a72"/><rect x="983.4" y="693.0" width="1.6" height="1.6" fill="#857560"/><rect x="1006.7" y="682.4" width="1.6" height="1.6" fill="#4f5e3e"/><rect x="981.8" y="704.2" width="1.6" height="1.6" fill="#8c7c66"/><rect x="987.9" y="700.8" width="1.6" height="1.6" fill="#4f5e3e"/><rect x="983.2" y="696.3" width="1.6" height="1.6" fill="#4f5e3e"/><rect x="981.2" y="699.4" width="1.6" height="1.6" fill="#9a8a72"/><rect x="994.9" y="704.9" width="1.6" height="1.6" fill="#9a8a72"/><rect x="993.6" y="707.0" width="1.6" height="1.6" fill="#9a8a72"/><rect x="980.2" y="682.9" width="1.6" height="1.6" fill="#75806a"/><rect x="980.8" y="685.3" width="1.6" height="1.6" fill="#5f6e4a"/><rect x="987.9" y="687.1" width="1.6" height="1.6" fill="#857560"/><rect x="981.1" y="703.4" width="1.6" height="1.6" fill="#9a8a72"/><rect x="989.7" y="683.7" width="1.6" height="1.6" fill="#4f5e3e"/><rect x="990.2" y="692.4" width="1.6" height="1.6" fill="#75806a"/><rect x="990.4" y="703.4" width="1.6" height="1.6" fill="#857560"/><rect x="995.1" y="696.7" width="1.6" height="1.6" fill="#4f5e3e"/><rect x="993.7" y="691.6" width="1.6" height="1.6" fill="#857560"/><rect x="999.3" y="705.3" width="1.6" height="1.6" fill="#5f6e4a"/><rect x="1006.4" y="694.1" width="1.6" height="1.6" fill="#75806a"/><rect x="989.2" y="701.3" width="1.6" height="1.6" fill="#75806a"/><rect x="988.5" y="690.2" width="1.6" height="1.6" fill="#75806a"/><rect x="997.1" y="681.6" width="1.6" height="1.6" fill="#857560"/><rect x="989.0" y="689.5" width="1.6" height="1.6" fill="#9a8a72"/><rect x="996.4" y="687.5" width="1.6" height="1.6" fill="#5f6e4a"/><rect x="980.6" y="681.6" width="1.6" height="1.6" fill="#857560"/><rect x="980.6" y="690.0" width="1.6" height="1.6" fill="#857560"/><rect x="992.3" y="696.0" width="1.6" height="1.6" fill="#9a8a72"/><rect x="984.8" y="685.0" width="1.6" height="1.6" fill="#4f5e3e"/><rect x="990.0" y="696.1" width="1.6" height="1.6" fill="#9a8a72"/><rect x="1001.3" y="682.8" width="1.6" height="1.6" fill="#4f5e3e"/><rect x="980.7" y="695.4" width="1.6" height="1.6" fill="#857560"/><rect x="983.5" y="693.5" width="1.6" height="1.6" fill="#857560"/><rect x="1001.7" y="686.4" width="1.6" height="1.6" fill="#6a5c4a"/><rect x="998.3" y="697.5" width="1.6" height="1.6" fill="#8c7c66"/><rect x="982.7" y="688.7" width="1.6" height="1.6" fill="#9a8a72"/><rect x="998.2" y="686.1" width="1.6" height="1.6" fill="#4f5e3e"/><rect x="1003.1" y="684.6" width="1.6" height="1.6" fill="#9a8a72"/><rect x="1000.0" y="685.9" width="1.6" height="1.6" fill="#75806a"/><rect x="992.2" y="686.1" width="1.6" height="1.6" fill="#8c7c66"/><rect x="980.9" y="705.9" width="1.6" height="1.6" fill="#9a8a72"/><rect x="1001.8" y="702.6" width="1.6" height="1.6" fill="#6a5c4a"/><rect x="1003.3" y="689.2" width="1.6" height="1.6" fill="#4f5e3e"/><rect x="997.3" y="701.8" width="1.6" height="1.6" fill="#9a8a72"/><rect x="995.9" y="691.4" width="1.6" height="1.6" fill="#75806a"/><rect x="1001.4" y="687.3" width="1.6" height="1.6" fill="#9a8a72"/><rect x="997.1" y="687.8" width="1.6" height="1.6" fill="#75806a"/><rect x="991.1" y="704.9" width="1.6" height="1.6" fill="#6a5c4a"/><rect x="985.4" y="692.9" width="1.6" height="1.6" fill="#4f5e3e"/><rect x="1003.8" y="706.6" width="1.6" height="1.6" fill="#5f6e4a"/><rect x="995.1" y="706.6" width="1.6" height="1.6" fill="#857560"/><rect x="986.0" y="700.1" width="1.6" height="1.6" fill="#4f5e3e"/><rect x="1000.3" y="700.2" width="1.6" height="1.6" fill="#9a8a72"/><rect x="994.7" y="704.0" width="1.6" height="1.6" fill="#4f5e3e"/><rect x="981.8" y="695.9" width="1.6" height="1.6" fill="#9a8a72"/><rect x="983.2" y="686.6" width="1.6" height="1.6" fill="#8c7c66"/><rect x="1004.4" y="698.7" width="1.6" height="1.6" fill="#6a5c4a"/><rect x="1004.2" y="704.3" width="1.6" height="1.6" fill="#75806a"/><rect x="981.3" y="693.0" width="1.6" height="1.6" fill="#8c7c66"/><rect x="984.6" y="688.1" width="1.6" height="1.6" fill="#857560"/><rect x="980.5" y="694.5" width="1.6" height="1.6" fill="#8c7c66"/><rect x="1005.4" y="696.5" width="1.6" height="1.6" fill="#9a8a72"/><rect x="983.4" y="706.2" width="1.6" height="1.6" fill="#75806a"/><rect x="992.9" y="701.1" width="1.6" height="1.6" fill="#9a8a72"/><rect x="986.0" y="683.3" width="1.6" height="1.6" fill="#4f5e3e"/><rect x="983.2" y="686.5" width="1.6" height="1.6" fill="#9a8a72"/><rect x="1004.9" y="701.8" width="1.6" height="1.6" fill="#4f5e3e"/><rect x="1004.9" y="693.2" width="1.6" height="1.6" fill="#75806a"/><rect x="1003.3" y="681.3" width="1.6" height="1.6" fill="#9a8a72"/><rect x="986.7" y="696.7" width="1.6" height="1.6" fill="#75806a"/><rect x="991.4" y="692.8" width="1.6" height="1.6" fill="#4f5e3e"/><rect x="1002.1" y="703.1" width="1.6" height="1.6" fill="#4f5e3e"/><rect x="983.4" y="683.4" width="1.6" height="1.6" fill="#8c7c66"/><rect x="993.0" y="680.9" width="1.6" height="1.6" fill="#857560"/><rect x="982.3" y="693.6" width="1.6" height="1.6" fill="#9a8a72"/><rect x="984.2" y="681.9" width="1.6" height="1.6" fill="#5f6e4a"/><rect x="997.5" y="695.8" width="1.6" height="1.6" fill="#9a8a72"/><rect x="987.2" y="706.7" width="1.6" height="1.6" fill="#5f6e4a"/><rect x="983.3" y="695.0" width="1.6" height="1.6" fill="#857560"/><rect x="999.5" y="701.5" width="1.6" height="1.6" fill="#75806a"/><rect x="984.8" y="690.1" width="1.6" height="1.6" fill="#75806a"/><rect x="997.6" y="694.6" width="1.6" height="1.6" fill="#857560"/><rect x="1001.6" y="696.8" width="1.6" height="1.6" fill="#5f6e4a"/><rect x="981.4" y="696.9" width="1.6" height="1.6" fill="#4f5e3e"/><rect x="999.0" y="691.4" width="1.6" height="1.6" fill="#857560"/><rect x="991.3" y="680.5" width="1.6" height="1.6" fill="#6a5c4a"/><rect x="994.5" y="698.8" width="1.6" height="1.6" fill="#8c7c66"/><rect x="1001.7" y="686.1" width="1.6" height="1.6" fill="#6a5c4a"/><rect x="1003.8" y="705.3" width="1.6" height="1.6" fill="#9a8a72"/><rect x="1006.2" y="695.1" width="1.6" height="1.6" fill="#4f5e3e"/><rect x="987.1" y="692.5" width="1.6" height="1.6" fill="#8c7c66"/><rect x="1005.4" y="699.8" width="1.6" height="1.6" fill="#4f5e3e"/><rect x="1004.0" y="701.4" width="1.6" height="1.6" fill="#857560"/><rect x="982.9" y="688.6" width="1.6" height="1.6" fill="#75806a"/><rect x="982.8" y="695.9" width="1.6" height="1.6" fill="#8c7c66"/><rect x="992.8" y="686.4" width="1.6" height="1.6" fill="#5f6e4a"/><rect x="981.2" y="682.5" width="1.6" height="1.6" fill="#8c7c66"/><rect x="997.8" y="690.1" width="1.6" height="1.6" fill="#4f5e3e"/><rect x="980.6" y="702.7" width="1.6" height="1.6" fill="#8c7c66"/><rect x="980.7" y="683.1" width="1.6" height="1.6" fill="#5f6e4a"/><rect x="1002.6" y="705.7" width="1.6" height="1.6" fill="#75806a"/><rect x="988.1" y="682.4" width="1.6" height="1.6" fill="#4f5e3e"/><rect x="995.2" y="694.3" width="1.6" height="1.6" fill="#6a5c4a"/><rect x="982.9" y="700.2" width="1.6" height="1.6" fill="#75806a"/><rect x="981.7" y="688.8" width="1.6" height="1.6" fill="#75806a"/><rect x="984.9" y="682.1" width="1.6" height="1.6" fill="#6a5c4a"/><rect x="997.4" y="692.3" width="1.6" height="1.6" fill="#857560"/><rect x="1000.3" y="690.6" width="1.6" height="1.6" fill="#9a8a72"/><rect x="996.2" y="705.3" width="1.6" height="1.6" fill="#75806a"/><rect x="991.3" y="682.2" width="1.6" height="1.6" fill="#75806a"/><rect x="986.4" y="705.1" width="1.6" height="1.6" fill="#4f5e3e"/><rect x="1000.2" y="684.3" width="1.6" height="1.6" fill="#857560"/><rect x="995.3" y="695.7" width="1.6" height="1.6" fill="#75806a"/><rect x="998.5" y="684.2" width="1.6" height="1.6" fill="#5f6e4a"/><rect x="1004.2" y="684.0" width="1.6" height="1.6" fill="#8c7c66"/><rect x="993.4" y="693.1" width="1.6" height="1.6" fill="#857560"/>
<ellipse cx="994" cy="694" rx="4" ry="7" fill="#4e6a3e" opacity=".75"/><circle cx="990" cy="686" r="1.6" fill="#cfd4c0"/>
<circle cx="1535" cy="683.5" r="15.5" fill="#fff" filter="drop-shadow(0 1px 2px rgba(0,0,0,.25))"/>
<path d="M1532,676.5 L1535,674 L1538,676.5 M1532,690.5 L1535,693 L1538,690.5 M1528,680.5 L1525.5,683.5 L1528,686.5 M1542,680.5 L1544.5,683.5 L1542,686.5" stroke="#3c4043" stroke-width="1.7" fill="none" stroke-linecap="round" stroke-linejoin="round"/>
<rect x="1303" y="707" width="256" height="12" fill="#f5f5f5" opacity=".75"/>
<text x="1306.5" y="716" font-size="8" fill="#202124" text-anchor="start" font-weight="normal">Keyboard shortcuts</text>
<text x="1386" y="716" font-size="8" fill="#202124" text-anchor="start" font-weight="normal">Map data ©2026</text>
<text x="1455" y="716" font-size="8" fill="#202124" text-anchor="start" font-weight="normal">Terms</text>
<text x="1487" y="716" font-size="8" fill="#202124" text-anchor="start" font-weight="normal">Report a map error</text>
<rect x="976" y="365" width="241" height="123" fill="#fff" filter="drop-shadow(0 1px 1px rgba(60,64,67,.18))"/>
<text x="986" y="387" font-size="11.8" fill="#202124" stroke="#202124" stroke-width=".3">Pesantren Darul Qur'an</text>
<text x="986" y="403" font-size="11.8" fill="#202124" stroke="#202124" stroke-width=".3">And</text>
<text x="986" y="417.0" font-size="9.8" fill="#5f6368" text-anchor="start" font-weight="normal">X995+XM5, Gg. H. Abdurrahim,</text>
<text x="986" y="429.8" font-size="9.8" fill="#5f6368" text-anchor="start" font-weight="normal">Dalam Bugis, Kec. Pontianak</text>
<text x="986" y="442.6" font-size="9.8" fill="#5f6368" text-anchor="start" font-weight="normal">Tim., Kota Pontianak, Kalimantan</text>
<text x="986" y="455.4" font-size="9.8" fill="#5f6368" text-anchor="start" font-weight="normal">Barat 78243</text>
<text x="986" y="474" font-size="9.5" fill="#5f6368" text-anchor="start" font-weight="normal">5.0</text>
<path d="M1008.5,466 L1010.2,469.6 L1014,470 L1011.2,472.5 L1012,476.3 L1008.5,474.4 L1005,476.3 L1005.8,472.5 L1003,470 L1006.8,469.6 Z" fill="#e8710a"/>
<text x="1017" y="474" font-size="9.5" fill="#5f6368" text-anchor="start" font-weight="normal">(2)</text>
<line x1="1021" y1="477" x2="1026" y2="477" stroke="#1a73e8" stroke-width=".8"/>
<circle cx="1038" cy="471" r="5" fill="none" stroke="#5f6368" stroke-width="1"/><path d="M1038,470 L1038,474 M1038,468 L1038,468.8" stroke="#5f6368" stroke-width="1.1"/>
<circle cx="1155" cy="388" r="12.5" fill="#f1f3f4"/>
<path d="M1154,382 L1149,382 L1149,394 L1161,394 L1161,389 M1155,388 L1161,382 M1157,382 L1161,382 L1161,386" stroke="#1a73e8" stroke-width="1.5" fill="none"/>
<circle cx="1194" cy="388" r="12.5" fill="#f1f3f4"/>
<path d="M1194,380 L1202,388 L1194,396 L1186,388 Z" fill="#1a73e8"/>
<path d="M1190,391 L1190,387 L1197,387 M1195,385 L1197.5,387 L1195,389" stroke="#fff" stroke-width="1.3" fill="none"/>
</svg>
  </div>

  <div id="footer"><div id="fpat"></div></div>
</div>
<div id="sbtrack"></div>
<div id="sbthumb"></div>
</body></html>
